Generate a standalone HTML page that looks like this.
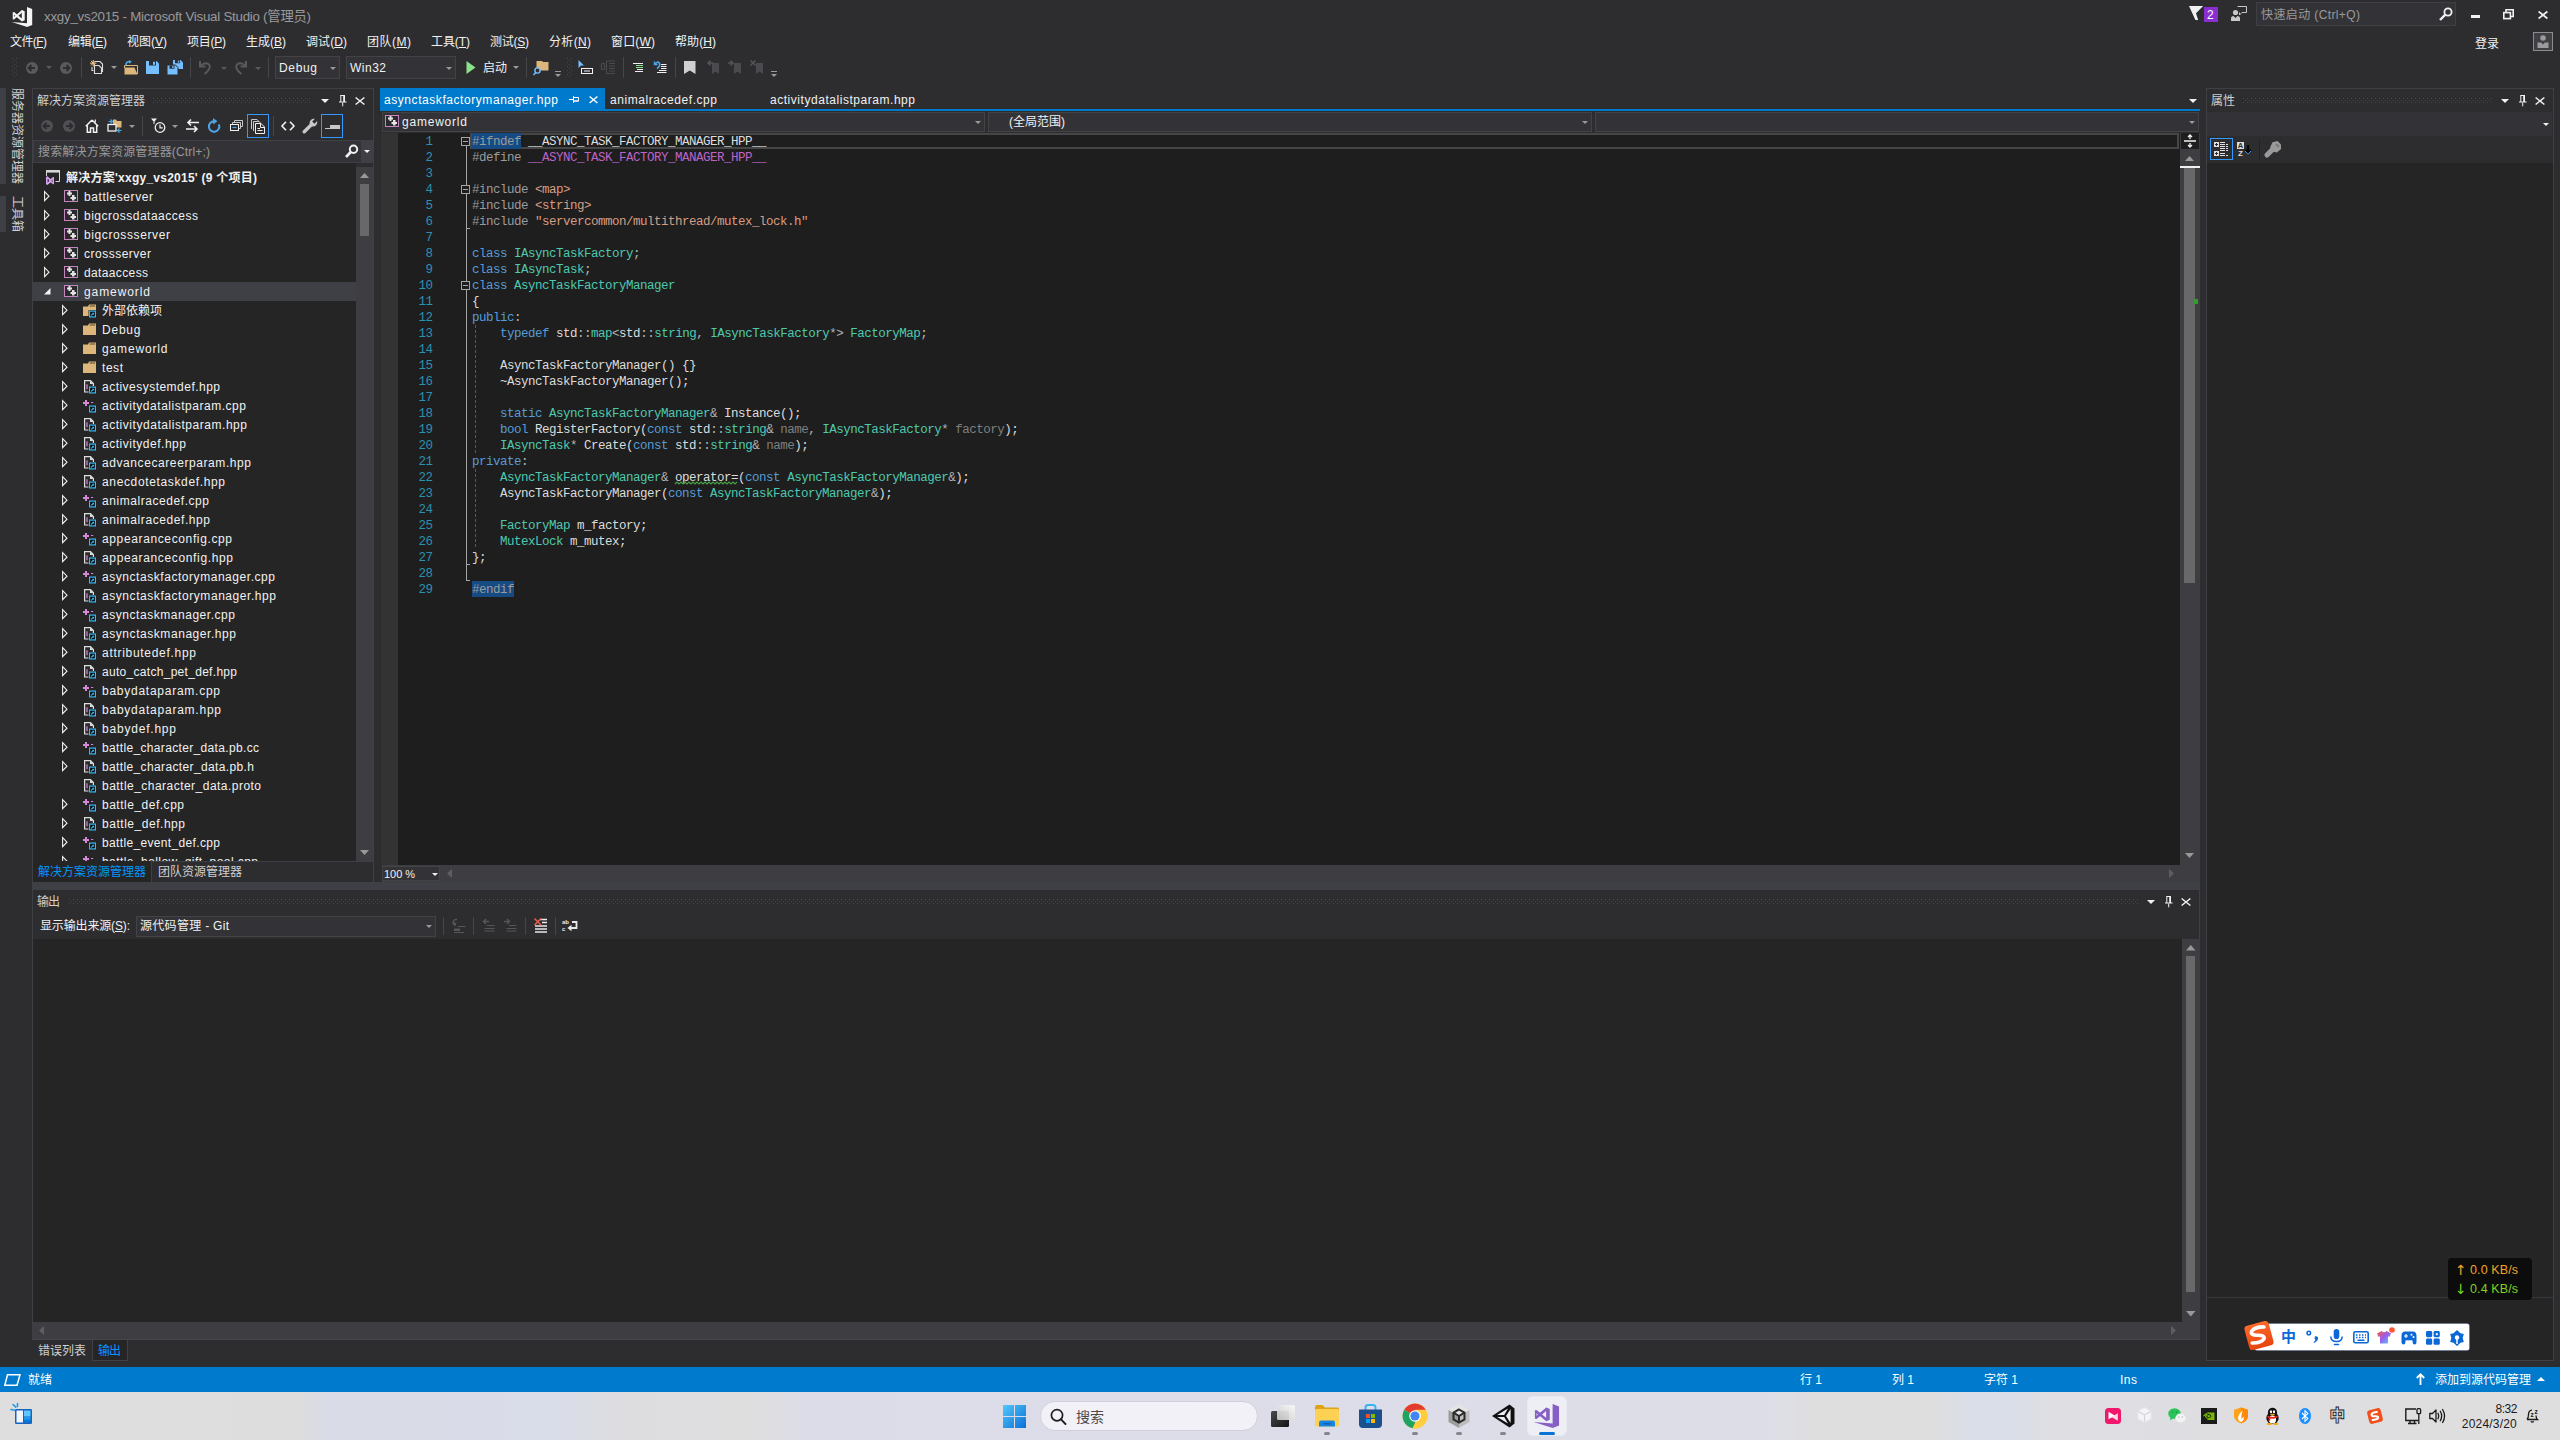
<!DOCTYPE html>
<html lang="zh-CN"><head><meta charset="utf-8"><title>xxgy_vs2015 - Microsoft Visual Studio</title>
<style>
html,body{margin:0;padding:0;background:#2d2d30;}
body{width:2560px;height:1440px;overflow:hidden;background:#2d2d30;position:relative;font-family:'Liberation Sans','Noto Sans CJK SC',sans-serif;font-size:12px;}
div,span.t,svg{position:absolute;}
span.t{white-space:pre;display:block;}
svg{overflow:visible;}
u{text-decoration:underline;text-underline-offset:1px;}
</style></head>
<body>
<svg width="0" height="0" style="left:0;top:0"><defs><pattern id="grip" width="4" height="4" patternUnits="userSpaceOnUse"><rect x="0" y="0" width="1" height="1" fill="#46464a"/><rect x="2" y="2" width="1" height="1" fill="#46464a"/></pattern><pattern id="grip2" width="4" height="4" patternUnits="userSpaceOnUse"><rect x="0" y="0" width="1" height="1" fill="#505055"/><rect x="2" y="2" width="1" height="1" fill="#505055"/></pattern></defs></svg>
<svg style="left:12px;top:7px;" width="21" height="21" viewBox="0 0 21 21"><path d="M15 0L20.2 2V18L15 20Z" fill="#f4f4f4"/><path d="M-.3 15.1L15.2 16.2V20Z" fill="#f4f4f4"/><path d="M1.4 5.9L10.6 13.6M1.4 11.7L10.6 3.7" stroke="#f4f4f4" stroke-width="2.1" fill="none"/><path d="M1.4 5.2V12.4" stroke="#f4f4f4" stroke-width="1.3"/><path d="M9.8 3L12.7 4.2V13.2L9.8 14.4Z" fill="#f4f4f4"/></svg>
<span class="t" style="top:6.8px;font-size:13.33px;line-height:20px;height:20px;color:#999999;left:44px;letter-spacing:-0.251px;">xxgy_vs2015 - Microsoft Visual Studio (管理员)</span>
<svg style="left:2189px;top:6px;" width="15" height="15" viewBox="0 0 15 15"><path d="M0 0H14.2L7 7.3L9.2 14H6.4Z" fill="#f1f1f1"/></svg>
<div style="left:2204px;top:7px;width:14px;height:15px;background:#8a2ed0;"></div>
<span class="t" style="top:6.5px;font-size:12px;line-height:16px;height:16px;color:#ffffff;left:2207px;">2</span>
<svg style="left:2231px;top:6px;" width="16" height="15" viewBox="0 0 16 15"><circle cx="4.5" cy="6.5" r="2.6" fill="#c8c8c8"/><path d="M0 15V12.5Q0 10 2.5 10L4.5 12L6.5 10Q9 10 9 12.5V15Z" fill="#c8c8c8"/><path d="M6.5 .5H15.5V6.5H11L8.5 9V6.5" fill="none" stroke="#c8c8c8" stroke-width="1"/></svg>
<div style="left:2256px;top:2px;width:200px;height:24px;background:#333337;box-sizing:border-box;border:1px solid #3f3f46;"></div>
<span class="t" style="top:5.5px;font-size:12px;line-height:18px;height:18px;color:#999999;left:2261px;letter-spacing:0.388px;">快速启动 (Ctrl+Q)</span>
<svg style="left:2439px;top:7px;" width="14" height="14" viewBox="0 0 14 14"><circle cx="9" cy="5" r="3.6" fill="none" stroke="#f1f1f1" stroke-width="1.8"/><path d="M6.3 7.7L1 13" stroke="#f1f1f1" stroke-width="2.4"/></svg>
<div style="left:2471px;top:15px;width:9px;height:3px;background:#f1f1f1;"></div>
<svg style="left:2503px;top:9px;" width="11" height="11" viewBox="0 0 11 11"><path d="M3 3V.8H10.2V7.5H8" fill="none" stroke="#f1f1f1" stroke-width="1.6"/><rect x=".8" y="3.6" width="6.6" height="6" fill="none" stroke="#f1f1f1" stroke-width="1.6"/></svg>
<svg style="left:2538px;top:10.5px;" width="10" height="8" viewBox="0 0 10 8"><path d="M.6 .5L9.4 7.5M9.4 .5L.6 7.5" stroke="#f1f1f1" stroke-width="1.6" fill="none"/></svg>
<span class="t" style="top:34.5px;font-size:12px;line-height:18px;height:18px;color:#f1f1f1;left:2475px;letter-spacing:-0.016px;">登录</span>
<div style="left:2533px;top:32px;width:20px;height:19px;background:#3f3f46;box-sizing:border-box;border:1px solid #8c8c8c;"></div>
<svg style="left:2537px;top:35px;" width="12" height="13" viewBox="0 0 12 13"><circle cx="6" cy="3" r="2.8" fill="#9b9b9b"/><path d="M.5 13V7.5H4L6 9.5L8 7.5H11.5V13Z" fill="#9b9b9b"/></svg>
<span class="t" style="top:33px;font-size:12px;line-height:18px;height:18px;color:#f1f1f1;left:10px;letter-spacing:-0.586px;">文件(<u>F</u>)</span>
<span class="t" style="top:33px;font-size:12px;line-height:18px;height:18px;color:#f1f1f1;left:68px;letter-spacing:-0.254px;">编辑(<u>E</u>)</span>
<span class="t" style="top:33px;font-size:12px;line-height:18px;height:18px;color:#f1f1f1;left:127px;letter-spacing:-0.004px;">视图(<u>V</u>)</span>
<span class="t" style="top:33px;font-size:12px;line-height:18px;height:18px;color:#f1f1f1;left:187px;letter-spacing:-0.254px;">项目(<u>P</u>)</span>
<span class="t" style="top:33px;font-size:12px;line-height:18px;height:18px;color:#f1f1f1;left:246px;letter-spacing:-0.004px;">生成(<u>B</u>)</span>
<span class="t" style="top:33px;font-size:12px;line-height:18px;height:18px;color:#f1f1f1;left:306px;letter-spacing:0.082px;">调试(<u>D</u>)</span>
<span class="t" style="top:33px;font-size:12px;line-height:18px;height:18px;color:#f1f1f1;left:367px;letter-spacing:0.500px;">团队(<u>M</u>)</span>
<span class="t" style="top:33px;font-size:12px;line-height:18px;height:18px;color:#f1f1f1;left:431px;letter-spacing:-0.086px;">工具(<u>T</u>)</span>
<span class="t" style="top:33px;font-size:12px;line-height:18px;height:18px;color:#f1f1f1;left:490px;letter-spacing:-0.254px;">测试(<u>S</u>)</span>
<span class="t" style="top:33px;font-size:12px;line-height:18px;height:18px;color:#f1f1f1;left:549px;letter-spacing:0.332px;">分析(<u>N</u>)</span>
<span class="t" style="top:33px;font-size:12px;line-height:18px;height:18px;color:#f1f1f1;left:611px;letter-spacing:0.168px;">窗口(<u>W</u>)</span>
<span class="t" style="top:33px;font-size:12px;line-height:18px;height:18px;color:#f1f1f1;left:675px;letter-spacing:0.082px;">帮助(<u>H</u>)</span>
<svg style="left:12px;top:58px" width="5" height="20"><rect width="5" height="20" fill="url(#grip)"/></svg>
<svg style="left:26px;top:61.5px;" width="12" height="12" viewBox="0 0 12 12"><circle cx="6" cy="6" r="6" fill="#5a5a5e"/><path d="M9 6H3M5.5 3L2.5 6L5.5 9" stroke="#2d2d30" stroke-width="1.8" fill="none"/></svg>
<svg style="left:45.5px;top:66px" width="6" height="3"><polygon points="0,0 6,0 3.0,3" fill="#5a5a5e"/></svg>
<svg style="left:60px;top:61.5px;" width="12" height="12" viewBox="0 0 12 12"><circle cx="6" cy="6" r="6" fill="#5a5a5e"/><path d="M3 6H9M6.5 3L9.5 6L6.5 9" stroke="#2d2d30" stroke-width="1.8" fill="none"/></svg>
<div style="left:81px;top:57px;width:1px;height:21px;background:#46464a;"></div>
<svg style="left:90px;top:60px;" width="14" height="15" viewBox="0 0 14 15"><path d="M4.5 1.5H10L12.5 4V11.5H10.5" fill="none" stroke="#dcdcdc" stroke-width="1.1"/><path d="M2 7V10.5H3.5" fill="none" stroke="#dcdcdc" stroke-width="1.1"/><path d="M4.5 5.5H9L11.5 8V13.5H4.5Z" fill="#2d2d30" stroke="#dcdcdc" stroke-width="1.1"/><path d="M3.2 0V6.4M0 3.2H6.4M1 1L5.4 5.4M5.4 1L1 5.4" stroke="#f5c98a" stroke-width="1"/></svg>
<svg style="left:111px;top:66px" width="6" height="3"><polygon points="0,0 6,0 3.0,3" fill="#999999"/></svg>
<svg style="left:124px;top:60px;" width="15" height="15" viewBox="0 0 15 15"><path d="M.5 14.5V7.5H10.5L13.5 14.5Z" fill="#dcb67a"/><path d="M.5 8V5.5H13.5V14" fill="none" stroke="#dcb67a" stroke-width="1"/><path d="M2 5Q2 1.5 6 1.5" fill="none" stroke="#4da6e8" stroke-width="1.6"/><path d="M5 0L8 1.8L5 3.8Z" fill="#4da6e8"/></svg>
<svg style="left:146px;top:61px;" width="13" height="13" viewBox="0 0 13 13"><path d="M0 0H10.5L13 2.5V13H0Z" fill="#75beff"/><rect x="3" y="0" width="7" height="4.5" fill="#2d2d30"/><rect x="7" y=".8" width="2" height="3" fill="#75beff"/></svg>
<svg style="left:167px;top:60px;" width="16" height="15" viewBox="0 0 16 15"><path d="M6 0H13.5L16 2.5V9H6Z" fill="#75beff"/><rect x="8" y="0" width="5" height="3.2" fill="#2d2d30"/><rect x="10.8" y=".6" width="1.4" height="2" fill="#75beff"/><path d="M0 5H8.5L11 7.5V15H0Z" fill="#75beff" stroke="#2d2d30" stroke-width="1"/><rect x="2.5" y="5.5" width="5" height="3.2" fill="#2d2d30"/><rect x="5.2" y="6" width="1.4" height="2" fill="#75beff"/></svg>
<div style="left:190px;top:57px;width:1px;height:21px;background:#46464a;"></div>
<svg style="left:198px;top:60px;" width="15" height="15" viewBox="0 0 15 15"><path d="M2 1V6.5H7.5" fill="none" stroke="#5a5a5e" stroke-width="2"/><path d="M2.5 6Q7 1.5 11 4.5Q14 8 6.5 14" fill="none" stroke="#5a5a5e" stroke-width="2"/></svg>
<svg style="left:220.5px;top:66.5px" width="6" height="3"><polygon points="0,0 6,0 3.0,3" fill="#5a5a5e"/></svg>
<svg style="left:233px;top:60px;" width="15" height="15" viewBox="0 0 15 15"><path d="M13 1V6.5H7.5" fill="none" stroke="#5a5a5e" stroke-width="2"/><path d="M12.5 6Q8 1.5 4 4.5Q1 8 8.5 14" fill="none" stroke="#5a5a5e" stroke-width="2"/></svg>
<svg style="left:254.5px;top:66.5px" width="6" height="3"><polygon points="0,0 6,0 3.0,3" fill="#5a5a5e"/></svg>
<div style="left:268px;top:57px;width:1px;height:21px;background:#46464a;"></div>
<div style="left:275px;top:56px;width:65px;height:23px;background:#333337;box-sizing:border-box;border:1px solid #434346;"></div>
<span class="t" style="top:58.5px;font-size:12px;line-height:18px;height:18px;color:#f1f1f1;left:279px;letter-spacing:0.656px;">Debug</span>
<svg style="left:329.5px;top:66.5px" width="6" height="3"><polygon points="0,0 6,0 3.0,3" fill="#999999"/></svg>
<div style="left:346px;top:56px;width:110px;height:23px;background:#333337;box-sizing:border-box;border:1px solid #434346;"></div>
<span class="t" style="top:58.5px;font-size:12px;line-height:18px;height:18px;color:#f1f1f1;left:350px;letter-spacing:0.496px;">Win32</span>
<svg style="left:445.5px;top:66.5px" width="6" height="3"><polygon points="0,0 6,0 3.0,3" fill="#999999"/></svg>
<svg style="left:466px;top:61px;" width="10" height="13" viewBox="0 0 10 13"><path d="M.5 0L9.5 6.5L.5 13Z" fill="#8ae28a"/></svg>
<span class="t" style="top:58.5px;font-size:12px;line-height:18px;height:18px;color:#f1f1f1;left:483px;letter-spacing:-0.016px;">启动</span>
<svg style="left:513px;top:66px" width="6" height="3"><polygon points="0,0 6,0 3.0,3" fill="#999999"/></svg>
<div style="left:526px;top:57px;width:1px;height:21px;background:#46464a;"></div>
<svg style="left:533px;top:60px;" width="17" height="16" viewBox="0 0 17 16"><path d="M3.5 1H9L10 2H15.5V10.5H3.5Z" fill="#dcb67a"/><circle cx="4.5" cy="10.5" r="2.6" fill="#2d2d30" stroke="#75beff" stroke-width="1.4"/><path d="M2.8 12.5L.5 15" stroke="#75beff" stroke-width="1.6"/></svg>
<div style="left:555px;top:71px;width:6px;height:1px;background:#999999;"></div>
<svg style="left:555px;top:74px" width="6" height="3"><polygon points="0,0 6,0 3.0,3" fill="#999999"/></svg>
<svg style="left:567px;top:58px" width="5" height="20"><rect width="5" height="20" fill="url(#grip)"/></svg>
<svg style="left:578px;top:60px;" width="16" height="15" viewBox="0 0 16 15"><path d="M.5 0L6 5.5H3L.5 8Z" fill="#75beff"/><rect x="3.5" y="8.5" width="11" height="5" fill="none" stroke="#f1f1f1"/><path d="M6 11H12" stroke="#f1f1f1"/></svg>
<svg style="left:601px;top:60px;" width="16" height="15" viewBox="0 0 16 15"><path d="M.5 3.5H3.5V9.5H.5Z M5.5 1H14M8 3.5H14M8 6H14M8 8.5H14M8 11H14M5.5 13.5H14M5.5 1V13.5" fill="none" stroke="#4a4a4f"/></svg>
<div style="left:623px;top:57px;width:1px;height:21px;background:#46464a;"></div>
<svg style="left:631px;top:61px;" width="15" height="13" viewBox="0 0 15 13"><path d="M2 2.5H12M6 8.5H12M4 10.5H12" stroke="#f1f1f1"/><path d="M5 4.5H12M5 6.5H12" stroke="#8ae28a"/></svg>
<svg style="left:653px;top:60px;" width="16" height="15" viewBox="0 0 16 15"><path d="M1.5 1.5V4.5H4.5" fill="none" stroke="#4da6e8" stroke-width="1.4"/><path d="M2 4Q4.5 .8 6.5 3.2Q7.5 6 4 8.5" fill="none" stroke="#4da6e8" stroke-width="1.6"/><path d="M8 4.5H13.5M8 6.5H13.5M8 8.5H13.5M6 10.5H13.5M4 12.5H13.5" stroke="#f1f1f1"/></svg>
<div style="left:675px;top:57px;width:1px;height:21px;background:#46464a;"></div>
<svg style="left:684px;top:61px;" width="12" height="13" viewBox="0 0 12 13"><path d="M0 0H11.5V13L5.75 9.6L0 13Z" fill="#d0d0d0"/></svg>
<svg style="left:706px;top:60px;" width="14" height="15" viewBox="0 0 14 15"><path d="M6 3H13V14L9.5 11.5L6 14Z" fill="#4a4a4f"/><path d="M7 3H2M4.5 .5L2 3L4.5 5.5" fill="none" stroke="#55555a" stroke-width="1.4"/></svg>
<svg style="left:728px;top:60px;" width="14" height="15" viewBox="0 0 14 15"><path d="M6 3H13V14L9.5 11.5L6 14Z" fill="#4a4a4f"/><path d="M0 3H5M2.5 .5L5 3L2.5 5.5" fill="none" stroke="#55555a" stroke-width="1.4"/></svg>
<svg style="left:750px;top:60px;" width="14" height="15" viewBox="0 0 14 15"><path d="M6 3H13V14L9.5 11.5L6 14Z" fill="#4a4a4f"/><path d="M.5 .5L5.5 5.5M5.5 .5L.5 5.5" fill="none" stroke="#55555a" stroke-width="1.4"/></svg>
<div style="left:771px;top:71px;width:6px;height:1px;background:#999999;"></div>
<svg style="left:771px;top:74px" width="6" height="3"><polygon points="0,0 6,0 3.0,3" fill="#999999"/></svg>
<div style="left:0px;top:88px;width:6px;height:96px;background:#3f3f46;"></div>
<div style="left:0px;top:196px;width:6px;height:36px;background:#3f3f46;"></div>
<span class="t" style="left:8px;top:88px;width:18px;height:96px;line-height:18px;font-size:12px;color:#d0d0d0;writing-mode:vertical-rl;text-orientation:sideways;white-space:pre;">服务器资源管理器</span>
<span class="t" style="left:8px;top:196px;width:18px;height:37px;line-height:18px;font-size:12px;color:#d0d0d0;writing-mode:vertical-rl;text-orientation:sideways;white-space:pre;">工具箱</span>
<div style="left:32px;top:88px;width:342px;height:795px;background:#3f3f46;"></div>
<div style="left:33px;top:89px;width:340px;height:793px;background:#2d2d30;"></div>
<span class="t" style="top:91.5px;font-size:12px;line-height:18px;height:18px;color:#d0d0d0;left:37px;letter-spacing:-0.002px;">解决方案资源管理器</span>
<svg style="left:153px;top:98px" width="158" height="5"><rect width="158" height="5" fill="url(#grip)"/></svg>
<svg style="left:321px;top:99px" width="8" height="4"><polygon points="0,0 8,0 4.0,4" fill="#f1f1f1"/></svg>
<svg style="left:339px;top:95px;" width="8" height="12" viewBox="0 0 8 12"><path d="M1.8 .5V7M1.3 .5H6" fill="none" stroke="#f1f1f1" stroke-width="1"/><rect x="4.2" y=".5" width="1.8" height="6.5" fill="#f1f1f1"/><rect x="0" y="6.5" width="7.6" height="1" fill="#f1f1f1"/><rect x="3.2" y="7.5" width="1" height="3.8" fill="#f1f1f1"/></svg>
<svg style="left:355px;top:96.5px;" width="10" height="8" viewBox="0 0 10 8"><path d="M.6 .5L9.4 7.5M9.4 .5L.6 7.5" stroke="#f1f1f1" stroke-width="1.5" fill="none"/></svg>
<svg style="left:41px;top:120px;" width="12" height="12" viewBox="0 0 12 12"><circle cx="6" cy="6" r="6" fill="#4f4f54"/><path d="M9 6H3M5.5 3L2.5 6L5.5 9" stroke="#2d2d30" stroke-width="1.8" fill="none"/></svg>
<svg style="left:63px;top:120px;" width="12" height="12" viewBox="0 0 12 12"><circle cx="6" cy="6" r="6" fill="#4f4f54"/><path d="M3 6H9M6.5 3L9.5 6L6.5 9" stroke="#2d2d30" stroke-width="1.8" fill="none"/></svg>
<svg style="left:85px;top:119px;" width="14" height="14" viewBox="0 0 14 14"><path d="M7 1L.8 7.2M7 1L13.2 7.2M2.3 6.5V13.2H5.5V9H8.5V13.2H11.7V6.5" fill="none" stroke="#f1f1f1" stroke-width="1.5"/><path d="M10.3 .5V3.5" stroke="#f1f1f1" stroke-width="1.2"/></svg>
<svg style="left:107px;top:118px;" width="16" height="16" viewBox="0 0 16 16"><path d="M6 1.5H9L10 3H14.5V9.5H6Z" fill="#dcb67a"/><rect x="1" y="6.5" width="8" height="6.5" fill="#2d2d30" stroke="#f1f1f1" stroke-width="1.3"/><path d="M1.5 3.5H4.5M3.5 1.5L5.5 3.5L3.5 5.5" fill="none" stroke="#4da6e8" stroke-width="1.2"/><path d="M14.5 12.5H11.5M12.5 10.5L10.5 12.5L12.5 14.5" fill="none" stroke="#4da6e8" stroke-width="1.2"/></svg>
<svg style="left:129px;top:125px" width="6" height="3"><polygon points="0,0 6,0 3.0,3" fill="#999999"/></svg>
<div style="left:142px;top:116px;width:1px;height:20px;background:#46464a;"></div>
<svg style="left:151px;top:118px;" width="16" height="16" viewBox="0 0 16 16"><path d="M0 .5H6L3.5 3.5V6H2.5V3.5Z" fill="#f1f1f1"/><circle cx="9" cy="9.5" r="4.8" fill="none" stroke="#f1f1f1" stroke-width="1.3"/><path d="M9 6.5V9.8H11.8" fill="none" stroke="#f1f1f1" stroke-width="1.2"/></svg>
<svg style="left:172px;top:125px" width="6" height="3"><polygon points="0,0 6,0 3.0,3" fill="#999999"/></svg>
<svg style="left:186px;top:119px;" width="13" height="14" viewBox="0 0 13 14"><path d="M13 3.5H2M5 .5L2 3.5L5 6.5" fill="none" stroke="#f1f1f1" stroke-width="1.6"/><path d="M0 10H11M8 7L11 10L8 13" fill="none" stroke="#f1f1f1" stroke-width="1.6"/></svg>
<svg style="left:207px;top:118px;" width="14" height="15" viewBox="0 0 14 15"><path d="M11.8 6.3A5.2 5.2 0 1 1 7 3.3" fill="none" stroke="#4da6e8" stroke-width="2"/><path d="M6 0L10.5 3.3L6 6.6Z" fill="#4da6e8"/></svg>
<svg style="left:230px;top:120px;" width="13" height="12" viewBox="0 0 13 12"><path d="M4.5 2.5V.5H12.5V6.5H10.5" fill="none" stroke="#c8c8c8"/><path d="M2.5 4.5V2.5H10.5V8.5H8.5" fill="none" stroke="#c8c8c8"/><rect x=".5" y="4.5" width="8" height="6" fill="#2d2d30" stroke="#f1f1f1"/><path d="M2.5 7.5H6.5" stroke="#4da6e8" stroke-width="1.2"/></svg>
<div style="left:247px;top:114px;width:22px;height:24px;background:#2d2d30;box-sizing:border-box;border:1px solid #3399ff;"></div>
<svg style="left:251px;top:119px;" width="15" height="15" viewBox="0 0 15 15"><path d="M.5 10V.5H6L8 2.5" fill="none" stroke="#c8c8c8"/><path d="M2.5 12V2.5H8L10 4.5" fill="none" stroke="#c8c8c8"/><path d="M4.5 14.5V4.5H10L13.5 8V14.5Z" fill="#2d2d30" stroke="#f1f1f1"/><path d="M9.5 4.5V8.5H13.5" fill="none" stroke="#f1f1f1"/><path d="M6.5 9.5H9M6.5 11.5H11.5" stroke="#f1f1f1" stroke-width="1"/></svg>
<div style="left:273px;top:116px;width:1px;height:20px;background:#46464a;"></div>
<svg style="left:281px;top:121px;" width="14" height="10" viewBox="0 0 14 10"><path d="M5 .8L1 5L5 9.2M9 .8L13 5L9 9.2" fill="none" stroke="#f1f1f1" stroke-width="1.6"/></svg>
<svg style="left:302px;top:118px;" width="16" height="16" viewBox="0 0 16 16"><path d="M.8 12.8L7.6 6A4.4 4.4 0 0 1 13 .8L10.2 3.6L12.4 5.8L15.2 3A4.4 4.4 0 0 1 10 8.4L3.2 15.2Q2 16 1 15Q0 14 .8 12.8Z" fill="#c8c8c8"/></svg>
<div style="left:321px;top:114px;width:22px;height:24px;background:#2d2d30;box-sizing:border-box;border:1px solid #3399ff;"></div>
<div style="left:325px;top:128px;width:15px;height:1px;background:#c8c8c8;"></div>
<div style="left:330px;top:125px;width:10px;height:3px;background:#c8c8c8;"></div>
<div style="left:33px;top:140px;width:340px;height:23px;background:#3f3f46;"></div>
<div style="left:34px;top:141px;width:327px;height:21px;background:#333337;"></div>
<span class="t" style="top:142.5px;font-size:12px;line-height:18px;height:18px;color:#999999;left:38px;letter-spacing:0.167px;">搜索解决方案资源管理器(Ctrl+;)</span>
<svg style="left:344px;top:144px;" width="14" height="14" viewBox="0 0 14 14"><circle cx="9.5" cy="5.3" r="3.7" fill="none" stroke="#f1f1f1" stroke-width="2"/><path d="M6.8 8L2 13" stroke="#f1f1f1" stroke-width="2.6"/></svg>
<svg style="left:364px;top:150px" width="6" height="3"><polygon points="0,0 6,0 3.0,3" fill="#f1f1f1"/></svg>
<div style="left:33px;top:163px;width:323px;height:698px;background:#252526;"></div>
<div style="left:356px;top:167px;width:17px;height:694px;background:#3e3e42;"></div>
<svg style="left:360px;top:172.5px" width="9" height="5"><polygon points="0,5 9,5 4.5,0" fill="#999999"/></svg>
<div style="left:360px;top:184px;width:9px;height:52px;background:#686868;"></div>
<svg style="left:360px;top:850px" width="9" height="5"><polygon points="0,0 9,0 4.5,5" fill="#999999"/></svg>
<div style="left:33px;top:282px;width:323px;height:19px;background:#3f3f46;"></div>
<div style="left:33px;top:163px;width:323px;height:698px;overflow:hidden;">
<svg style="left:13px;top:7.0px;" width="15" height="15" viewBox="0 0 15 15"><path d="M.5 6V.5H13.5V11.5H9.5" fill="none" stroke="#d6d6d6"/><path d="M0 0H14V2.6H0Z" fill="#d6d6d6"/><path d="M0 7L1.3 6.3L5.8 10V11.6L1.3 15L0 14.3ZM1.6 8.8V12.4L3.8 10.6Z" fill="#d8a0f0" fill-rule="evenodd"/><path d="M2.6 10.7L6 7.8L8 6.8V14.6L6 13.6ZM4.6 10.7L6.4 12.2V9.2Z" fill="#d8a0f0" fill-rule="evenodd"/></svg>
<span class="t" style="top:5.5px;font-size:12px;line-height:18px;height:18px;color:#f1f1f1;left:33px;font-weight:bold;letter-spacing:0.245px;">解决方案'xxgy_vs2015' (9 个项目)</span>
<svg style="left:11px;top:27.5px;" width="6" height="11" viewBox="0 0 6 11"><path d="M.6 .7L5 5.2L.6 9.7Z" fill="none" stroke="#f1f1f1" stroke-width="1.1"/></svg>
<svg style="left:31px;top:27.0px;" width="14" height="12" viewBox="0 0 14 12"><rect x=".5" y=".5" width="13" height="11" fill="#2a2a2d" stroke="#c586c0"/><path d="M3 2.5H8V4.5H3ZM4.5 1H6.5V6H4.5ZM6.5 7H12V9H6.5ZM8 5H10.5V10.5H8Z" fill="#e4e4e4"/></svg>
<span class="t" style="top:24.5px;font-size:12px;line-height:18px;height:18px;color:#f1f1f1;left:51px;letter-spacing:0.572px;">battleserver</span>
<svg style="left:11px;top:46.5px;" width="6" height="11" viewBox="0 0 6 11"><path d="M.6 .7L5 5.2L.6 9.7Z" fill="none" stroke="#f1f1f1" stroke-width="1.1"/></svg>
<svg style="left:31px;top:46.0px;" width="14" height="12" viewBox="0 0 14 12"><rect x=".5" y=".5" width="13" height="11" fill="#2a2a2d" stroke="#c586c0"/><path d="M3 2.5H8V4.5H3ZM4.5 1H6.5V6H4.5ZM6.5 7H12V9H6.5ZM8 5H10.5V10.5H8Z" fill="#e4e4e4"/></svg>
<span class="t" style="top:43.5px;font-size:12px;line-height:18px;height:18px;color:#f1f1f1;left:51px;letter-spacing:0.506px;">bigcrossdataaccess</span>
<svg style="left:11px;top:65.5px;" width="6" height="11" viewBox="0 0 6 11"><path d="M.6 .7L5 5.2L.6 9.7Z" fill="none" stroke="#f1f1f1" stroke-width="1.1"/></svg>
<svg style="left:31px;top:65.0px;" width="14" height="12" viewBox="0 0 14 12"><rect x=".5" y=".5" width="13" height="11" fill="#2a2a2d" stroke="#c586c0"/><path d="M3 2.5H8V4.5H3ZM4.5 1H6.5V6H4.5ZM6.5 7H12V9H6.5ZM8 5H10.5V10.5H8Z" fill="#e4e4e4"/></svg>
<span class="t" style="top:62.5px;font-size:12px;line-height:18px;height:18px;color:#f1f1f1;left:51px;letter-spacing:0.613px;">bigcrossserver</span>
<svg style="left:11px;top:84.5px;" width="6" height="11" viewBox="0 0 6 11"><path d="M.6 .7L5 5.2L.6 9.7Z" fill="none" stroke="#f1f1f1" stroke-width="1.1"/></svg>
<svg style="left:31px;top:84.0px;" width="14" height="12" viewBox="0 0 14 12"><rect x=".5" y=".5" width="13" height="11" fill="#2a2a2d" stroke="#c586c0"/><path d="M3 2.5H8V4.5H3ZM4.5 1H6.5V6H4.5ZM6.5 7H12V9H6.5ZM8 5H10.5V10.5H8Z" fill="#e4e4e4"/></svg>
<span class="t" style="top:81.5px;font-size:12px;line-height:18px;height:18px;color:#f1f1f1;left:51px;letter-spacing:0.498px;">crossserver</span>
<svg style="left:11px;top:103.5px;" width="6" height="11" viewBox="0 0 6 11"><path d="M.6 .7L5 5.2L.6 9.7Z" fill="none" stroke="#f1f1f1" stroke-width="1.1"/></svg>
<svg style="left:31px;top:103.0px;" width="14" height="12" viewBox="0 0 14 12"><rect x=".5" y=".5" width="13" height="11" fill="#2a2a2d" stroke="#c586c0"/><path d="M3 2.5H8V4.5H3ZM4.5 1H6.5V6H4.5ZM6.5 7H12V9H6.5ZM8 5H10.5V10.5H8Z" fill="#e4e4e4"/></svg>
<span class="t" style="top:100.5px;font-size:12px;line-height:18px;height:18px;color:#f1f1f1;left:51px;letter-spacing:0.366px;">dataaccess</span>
<svg style="left:10.5px;top:124.5px;" width="7" height="7" viewBox="0 0 7 7"><path d="M6.5 0V6.5H0Z" fill="#f1f1f1"/></svg>
<svg style="left:31px;top:122.0px;" width="14" height="12" viewBox="0 0 14 12"><rect x=".5" y=".5" width="13" height="11" fill="#2a2a2d" stroke="#c586c0"/><path d="M3 2.5H8V4.5H3ZM4.5 1H6.5V6H4.5ZM6.5 7H12V9H6.5ZM8 5H10.5V10.5H8Z" fill="#e4e4e4"/></svg>
<span class="t" style="top:119.5px;font-size:12px;line-height:18px;height:18px;color:#f1f1f1;left:51px;letter-spacing:0.912px;">gameworld</span>
<svg style="left:29px;top:141.5px;" width="6" height="11" viewBox="0 0 6 11"><path d="M.6 .7L5 5.2L.6 9.7Z" fill="none" stroke="#f1f1f1" stroke-width="1.1"/></svg>
<svg style="left:50px;top:140.5px;" width="15" height="16" viewBox="0 0 15 16"><path d="M0 2.5H5L6 .5H13V12H0Z" fill="#dcb67a"/><path d="M6.8 2H12.2" stroke="#4a3c25" stroke-width=".9"/><rect x="5.5" y="6.0" width="8" height="8" fill="#252526"/><rect x="6.6" y="7.1" width="5.8" height="5.8" fill="#000" stroke="#3db8f5" stroke-width="1.2"/><path d="M8.2 11.5L10.6 9.1" stroke="#3db8f5" stroke-width="1.1"/><path d="M8.8 8.7H11V10.9Z" fill="#3db8f5"/></svg>
<span class="t" style="top:138.5px;font-size:12px;line-height:18px;height:18px;color:#f1f1f1;left:69px;letter-spacing:-0.004px;">外部依赖项</span>
<svg style="left:29px;top:160.5px;" width="6" height="11" viewBox="0 0 6 11"><path d="M.6 .7L5 5.2L.6 9.7Z" fill="none" stroke="#f1f1f1" stroke-width="1.1"/></svg>
<svg style="left:50px;top:159.5px;" width="15" height="16" viewBox="0 0 15 16"><path d="M0 2.5H5L6 .5H13V12H0Z" fill="#dcb67a"/><path d="M6.8 2H12.2" stroke="#4a3c25" stroke-width=".9"/></svg>
<span class="t" style="top:157.5px;font-size:12px;line-height:18px;height:18px;color:#f1f1f1;left:69px;letter-spacing:0.781px;">Debug</span>
<svg style="left:29px;top:179.5px;" width="6" height="11" viewBox="0 0 6 11"><path d="M.6 .7L5 5.2L.6 9.7Z" fill="none" stroke="#f1f1f1" stroke-width="1.1"/></svg>
<svg style="left:50px;top:178.5px;" width="15" height="16" viewBox="0 0 15 16"><path d="M0 2.5H5L6 .5H13V12H0Z" fill="#dcb67a"/><path d="M6.8 2H12.2" stroke="#4a3c25" stroke-width=".9"/></svg>
<span class="t" style="top:176.5px;font-size:12px;line-height:18px;height:18px;color:#f1f1f1;left:69px;letter-spacing:0.850px;">gameworld</span>
<svg style="left:29px;top:198.5px;" width="6" height="11" viewBox="0 0 6 11"><path d="M.6 .7L5 5.2L.6 9.7Z" fill="none" stroke="#f1f1f1" stroke-width="1.1"/></svg>
<svg style="left:50px;top:197.5px;" width="15" height="16" viewBox="0 0 15 16"><path d="M0 2.5H5L6 .5H13V12H0Z" fill="#dcb67a"/><path d="M6.8 2H12.2" stroke="#4a3c25" stroke-width=".9"/></svg>
<span class="t" style="top:195.5px;font-size:12px;line-height:18px;height:18px;color:#f1f1f1;left:69px;letter-spacing:0.552px;">test</span>
<svg style="left:29px;top:217.5px;" width="6" height="11" viewBox="0 0 6 11"><path d="M.6 .7L5 5.2L.6 9.7Z" fill="none" stroke="#f1f1f1" stroke-width="1.1"/></svg>
<svg style="left:50px;top:216.5px;" width="15" height="16" viewBox="0 0 15 16"><path d="M1.6 .6H7.5L10.4 3.5V12H1.6Z" fill="#2b2b2e" stroke="#dedede" stroke-width="1.2"/><path d="M7 .6V4H10.4Z" fill="#dedede"/><path d="M4 4.2V9.2" stroke="#d787d7" stroke-width="1.2"/><rect x="5.5" y="6.0" width="8" height="8" fill="#252526"/><rect x="6.6" y="7.1" width="5.8" height="5.8" fill="#000" stroke="#3db8f5" stroke-width="1.2"/><path d="M8.2 11.5L10.6 9.1" stroke="#3db8f5" stroke-width="1.1"/><path d="M8.8 8.7H11V10.9Z" fill="#3db8f5"/></svg>
<span class="t" style="top:214.5px;font-size:12px;line-height:18px;height:18px;color:#f1f1f1;left:69px;letter-spacing:0.478px;">activesystemdef.hpp</span>
<svg style="left:29px;top:236.5px;" width="6" height="11" viewBox="0 0 6 11"><path d="M.6 .7L5 5.2L.6 9.7Z" fill="none" stroke="#f1f1f1" stroke-width="1.1"/></svg>
<svg style="left:50px;top:235.5px;" width="15" height="16" viewBox="0 0 15 16"><path d="M0 3H6V5H0ZM2 1H4V7H2Z" fill="#d787d7"/><path d="M8 3.5H10.2" stroke="#d787d7" stroke-width="1"/><rect x="5.5" y="6.0" width="8" height="8" fill="#252526"/><rect x="6.6" y="7.1" width="5.8" height="5.8" fill="#000" stroke="#3db8f5" stroke-width="1.2"/><path d="M8.2 11.5L10.6 9.1" stroke="#3db8f5" stroke-width="1.1"/><path d="M8.8 8.7H11V10.9Z" fill="#3db8f5"/></svg>
<span class="t" style="top:233.5px;font-size:12px;line-height:18px;height:18px;color:#f1f1f1;left:69px;letter-spacing:0.525px;">activitydatalistparam.cpp</span>
<svg style="left:29px;top:255.5px;" width="6" height="11" viewBox="0 0 6 11"><path d="M.6 .7L5 5.2L.6 9.7Z" fill="none" stroke="#f1f1f1" stroke-width="1.1"/></svg>
<svg style="left:50px;top:254.5px;" width="15" height="16" viewBox="0 0 15 16"><path d="M1.6 .6H7.5L10.4 3.5V12H1.6Z" fill="#2b2b2e" stroke="#dedede" stroke-width="1.2"/><path d="M7 .6V4H10.4Z" fill="#dedede"/><path d="M4 4.2V9.2" stroke="#d787d7" stroke-width="1.2"/><rect x="5.5" y="6.0" width="8" height="8" fill="#252526"/><rect x="6.6" y="7.1" width="5.8" height="5.8" fill="#000" stroke="#3db8f5" stroke-width="1.2"/><path d="M8.2 11.5L10.6 9.1" stroke="#3db8f5" stroke-width="1.1"/><path d="M8.8 8.7H11V10.9Z" fill="#3db8f5"/></svg>
<span class="t" style="top:252.5px;font-size:12px;line-height:18px;height:18px;color:#f1f1f1;left:69px;letter-spacing:0.538px;">activitydatalistparam.hpp</span>
<svg style="left:29px;top:274.5px;" width="6" height="11" viewBox="0 0 6 11"><path d="M.6 .7L5 5.2L.6 9.7Z" fill="none" stroke="#f1f1f1" stroke-width="1.1"/></svg>
<svg style="left:50px;top:273.5px;" width="15" height="16" viewBox="0 0 15 16"><path d="M1.6 .6H7.5L10.4 3.5V12H1.6Z" fill="#2b2b2e" stroke="#dedede" stroke-width="1.2"/><path d="M7 .6V4H10.4Z" fill="#dedede"/><path d="M4 4.2V9.2" stroke="#d787d7" stroke-width="1.2"/><rect x="5.5" y="6.0" width="8" height="8" fill="#252526"/><rect x="6.6" y="7.1" width="5.8" height="5.8" fill="#000" stroke="#3db8f5" stroke-width="1.2"/><path d="M8.2 11.5L10.6 9.1" stroke="#3db8f5" stroke-width="1.1"/><path d="M8.8 8.7H11V10.9Z" fill="#3db8f5"/></svg>
<span class="t" style="top:271.5px;font-size:12px;line-height:18px;height:18px;color:#f1f1f1;left:69px;letter-spacing:0.520px;">activitydef.hpp</span>
<svg style="left:29px;top:293.5px;" width="6" height="11" viewBox="0 0 6 11"><path d="M.6 .7L5 5.2L.6 9.7Z" fill="none" stroke="#f1f1f1" stroke-width="1.1"/></svg>
<svg style="left:50px;top:292.5px;" width="15" height="16" viewBox="0 0 15 16"><path d="M1.6 .6H7.5L10.4 3.5V12H1.6Z" fill="#2b2b2e" stroke="#dedede" stroke-width="1.2"/><path d="M7 .6V4H10.4Z" fill="#dedede"/><path d="M4 4.2V9.2" stroke="#d787d7" stroke-width="1.2"/><rect x="5.5" y="6.0" width="8" height="8" fill="#252526"/><rect x="6.6" y="7.1" width="5.8" height="5.8" fill="#000" stroke="#3db8f5" stroke-width="1.2"/><path d="M8.2 11.5L10.6 9.1" stroke="#3db8f5" stroke-width="1.1"/><path d="M8.8 8.7H11V10.9Z" fill="#3db8f5"/></svg>
<span class="t" style="top:290.5px;font-size:12px;line-height:18px;height:18px;color:#f1f1f1;left:69px;letter-spacing:0.583px;">advancecareerparam.hpp</span>
<svg style="left:29px;top:312.5px;" width="6" height="11" viewBox="0 0 6 11"><path d="M.6 .7L5 5.2L.6 9.7Z" fill="none" stroke="#f1f1f1" stroke-width="1.1"/></svg>
<svg style="left:50px;top:311.5px;" width="15" height="16" viewBox="0 0 15 16"><path d="M1.6 .6H7.5L10.4 3.5V12H1.6Z" fill="#2b2b2e" stroke="#dedede" stroke-width="1.2"/><path d="M7 .6V4H10.4Z" fill="#dedede"/><path d="M4 4.2V9.2" stroke="#d787d7" stroke-width="1.2"/><rect x="5.5" y="6.0" width="8" height="8" fill="#252526"/><rect x="6.6" y="7.1" width="5.8" height="5.8" fill="#000" stroke="#3db8f5" stroke-width="1.2"/><path d="M8.2 11.5L10.6 9.1" stroke="#3db8f5" stroke-width="1.1"/><path d="M8.8 8.7H11V10.9Z" fill="#3db8f5"/></svg>
<span class="t" style="top:309.5px;font-size:12px;line-height:18px;height:18px;color:#f1f1f1;left:69px;letter-spacing:0.643px;">anecdotetaskdef.hpp</span>
<svg style="left:29px;top:331.5px;" width="6" height="11" viewBox="0 0 6 11"><path d="M.6 .7L5 5.2L.6 9.7Z" fill="none" stroke="#f1f1f1" stroke-width="1.1"/></svg>
<svg style="left:50px;top:330.5px;" width="15" height="16" viewBox="0 0 15 16"><path d="M0 3H6V5H0ZM2 1H4V7H2Z" fill="#d787d7"/><path d="M8 3.5H10.2" stroke="#d787d7" stroke-width="1"/><rect x="5.5" y="6.0" width="8" height="8" fill="#252526"/><rect x="6.6" y="7.1" width="5.8" height="5.8" fill="#000" stroke="#3db8f5" stroke-width="1.2"/><path d="M8.2 11.5L10.6 9.1" stroke="#3db8f5" stroke-width="1.1"/><path d="M8.8 8.7H11V10.9Z" fill="#3db8f5"/></svg>
<span class="t" style="top:328.5px;font-size:12px;line-height:18px;height:18px;color:#f1f1f1;left:69px;letter-spacing:0.559px;">animalracedef.cpp</span>
<svg style="left:29px;top:350.5px;" width="6" height="11" viewBox="0 0 6 11"><path d="M.6 .7L5 5.2L.6 9.7Z" fill="none" stroke="#f1f1f1" stroke-width="1.1"/></svg>
<svg style="left:50px;top:349.5px;" width="15" height="16" viewBox="0 0 15 16"><path d="M1.6 .6H7.5L10.4 3.5V12H1.6Z" fill="#2b2b2e" stroke="#dedede" stroke-width="1.2"/><path d="M7 .6V4H10.4Z" fill="#dedede"/><path d="M4 4.2V9.2" stroke="#d787d7" stroke-width="1.2"/><rect x="5.5" y="6.0" width="8" height="8" fill="#252526"/><rect x="6.6" y="7.1" width="5.8" height="5.8" fill="#000" stroke="#3db8f5" stroke-width="1.2"/><path d="M8.2 11.5L10.6 9.1" stroke="#3db8f5" stroke-width="1.1"/><path d="M8.8 8.7H11V10.9Z" fill="#3db8f5"/></svg>
<span class="t" style="top:347.5px;font-size:12px;line-height:18px;height:18px;color:#f1f1f1;left:69px;letter-spacing:0.579px;">animalracedef.hpp</span>
<svg style="left:29px;top:369.5px;" width="6" height="11" viewBox="0 0 6 11"><path d="M.6 .7L5 5.2L.6 9.7Z" fill="none" stroke="#f1f1f1" stroke-width="1.1"/></svg>
<svg style="left:50px;top:368.5px;" width="15" height="16" viewBox="0 0 15 16"><path d="M0 3H6V5H0ZM2 1H4V7H2Z" fill="#d787d7"/><path d="M8 3.5H10.2" stroke="#d787d7" stroke-width="1"/><rect x="5.5" y="6.0" width="8" height="8" fill="#252526"/><rect x="6.6" y="7.1" width="5.8" height="5.8" fill="#000" stroke="#3db8f5" stroke-width="1.2"/><path d="M8.2 11.5L10.6 9.1" stroke="#3db8f5" stroke-width="1.1"/><path d="M8.8 8.7H11V10.9Z" fill="#3db8f5"/></svg>
<span class="t" style="top:366.5px;font-size:12px;line-height:18px;height:18px;color:#f1f1f1;left:69px;letter-spacing:0.627px;">appearanceconfig.cpp</span>
<svg style="left:29px;top:388.5px;" width="6" height="11" viewBox="0 0 6 11"><path d="M.6 .7L5 5.2L.6 9.7Z" fill="none" stroke="#f1f1f1" stroke-width="1.1"/></svg>
<svg style="left:50px;top:387.5px;" width="15" height="16" viewBox="0 0 15 16"><path d="M1.6 .6H7.5L10.4 3.5V12H1.6Z" fill="#2b2b2e" stroke="#dedede" stroke-width="1.2"/><path d="M7 .6V4H10.4Z" fill="#dedede"/><path d="M4 4.2V9.2" stroke="#d787d7" stroke-width="1.2"/><rect x="5.5" y="6.0" width="8" height="8" fill="#252526"/><rect x="6.6" y="7.1" width="5.8" height="5.8" fill="#000" stroke="#3db8f5" stroke-width="1.2"/><path d="M8.2 11.5L10.6 9.1" stroke="#3db8f5" stroke-width="1.1"/><path d="M8.8 8.7H11V10.9Z" fill="#3db8f5"/></svg>
<span class="t" style="top:385.5px;font-size:12px;line-height:18px;height:18px;color:#f1f1f1;left:69px;letter-spacing:0.644px;">appearanceconfig.hpp</span>
<svg style="left:29px;top:407.5px;" width="6" height="11" viewBox="0 0 6 11"><path d="M.6 .7L5 5.2L.6 9.7Z" fill="none" stroke="#f1f1f1" stroke-width="1.1"/></svg>
<svg style="left:50px;top:406.5px;" width="15" height="16" viewBox="0 0 15 16"><path d="M0 3H6V5H0ZM2 1H4V7H2Z" fill="#d787d7"/><path d="M8 3.5H10.2" stroke="#d787d7" stroke-width="1"/><rect x="5.5" y="6.0" width="8" height="8" fill="#252526"/><rect x="6.6" y="7.1" width="5.8" height="5.8" fill="#000" stroke="#3db8f5" stroke-width="1.2"/><path d="M8.2 11.5L10.6 9.1" stroke="#3db8f5" stroke-width="1.1"/><path d="M8.8 8.7H11V10.9Z" fill="#3db8f5"/></svg>
<span class="t" style="top:404.5px;font-size:12px;line-height:18px;height:18px;color:#f1f1f1;left:69px;letter-spacing:0.548px;">asynctaskfactorymanager.cpp</span>
<svg style="left:29px;top:426.5px;" width="6" height="11" viewBox="0 0 6 11"><path d="M.6 .7L5 5.2L.6 9.7Z" fill="none" stroke="#f1f1f1" stroke-width="1.1"/></svg>
<svg style="left:50px;top:425.5px;" width="15" height="16" viewBox="0 0 15 16"><path d="M1.6 .6H7.5L10.4 3.5V12H1.6Z" fill="#2b2b2e" stroke="#dedede" stroke-width="1.2"/><path d="M7 .6V4H10.4Z" fill="#dedede"/><path d="M4 4.2V9.2" stroke="#d787d7" stroke-width="1.2"/><rect x="5.5" y="6.0" width="8" height="8" fill="#252526"/><rect x="6.6" y="7.1" width="5.8" height="5.8" fill="#000" stroke="#3db8f5" stroke-width="1.2"/><path d="M8.2 11.5L10.6 9.1" stroke="#3db8f5" stroke-width="1.1"/><path d="M8.8 8.7H11V10.9Z" fill="#3db8f5"/></svg>
<span class="t" style="top:423.5px;font-size:12px;line-height:18px;height:18px;color:#f1f1f1;left:69px;letter-spacing:0.561px;">asynctaskfactorymanager.hpp</span>
<svg style="left:29px;top:445.5px;" width="6" height="11" viewBox="0 0 6 11"><path d="M.6 .7L5 5.2L.6 9.7Z" fill="none" stroke="#f1f1f1" stroke-width="1.1"/></svg>
<svg style="left:50px;top:444.5px;" width="15" height="16" viewBox="0 0 15 16"><path d="M0 3H6V5H0ZM2 1H4V7H2Z" fill="#d787d7"/><path d="M8 3.5H10.2" stroke="#d787d7" stroke-width="1"/><rect x="5.5" y="6.0" width="8" height="8" fill="#252526"/><rect x="6.6" y="7.1" width="5.8" height="5.8" fill="#000" stroke="#3db8f5" stroke-width="1.2"/><path d="M8.2 11.5L10.6 9.1" stroke="#3db8f5" stroke-width="1.1"/><path d="M8.8 8.7H11V10.9Z" fill="#3db8f5"/></svg>
<span class="t" style="top:442.5px;font-size:12px;line-height:18px;height:18px;color:#f1f1f1;left:69px;letter-spacing:0.539px;">asynctaskmanager.cpp</span>
<svg style="left:29px;top:464.5px;" width="6" height="11" viewBox="0 0 6 11"><path d="M.6 .7L5 5.2L.6 9.7Z" fill="none" stroke="#f1f1f1" stroke-width="1.1"/></svg>
<svg style="left:50px;top:463.5px;" width="15" height="16" viewBox="0 0 15 16"><path d="M1.6 .6H7.5L10.4 3.5V12H1.6Z" fill="#2b2b2e" stroke="#dedede" stroke-width="1.2"/><path d="M7 .6V4H10.4Z" fill="#dedede"/><path d="M4 4.2V9.2" stroke="#d787d7" stroke-width="1.2"/><rect x="5.5" y="6.0" width="8" height="8" fill="#252526"/><rect x="6.6" y="7.1" width="5.8" height="5.8" fill="#000" stroke="#3db8f5" stroke-width="1.2"/><path d="M8.2 11.5L10.6 9.1" stroke="#3db8f5" stroke-width="1.1"/><path d="M8.8 8.7H11V10.9Z" fill="#3db8f5"/></svg>
<span class="t" style="top:461.5px;font-size:12px;line-height:18px;height:18px;color:#f1f1f1;left:69px;letter-spacing:0.557px;">asynctaskmanager.hpp</span>
<svg style="left:29px;top:483.5px;" width="6" height="11" viewBox="0 0 6 11"><path d="M.6 .7L5 5.2L.6 9.7Z" fill="none" stroke="#f1f1f1" stroke-width="1.1"/></svg>
<svg style="left:50px;top:482.5px;" width="15" height="16" viewBox="0 0 15 16"><path d="M1.6 .6H7.5L10.4 3.5V12H1.6Z" fill="#2b2b2e" stroke="#dedede" stroke-width="1.2"/><path d="M7 .6V4H10.4Z" fill="#dedede"/><path d="M4 4.2V9.2" stroke="#d787d7" stroke-width="1.2"/><rect x="5.5" y="6.0" width="8" height="8" fill="#252526"/><rect x="6.6" y="7.1" width="5.8" height="5.8" fill="#000" stroke="#3db8f5" stroke-width="1.2"/><path d="M8.2 11.5L10.6 9.1" stroke="#3db8f5" stroke-width="1.1"/><path d="M8.8 8.7H11V10.9Z" fill="#3db8f5"/></svg>
<span class="t" style="top:480.5px;font-size:12px;line-height:18px;height:18px;color:#f1f1f1;left:69px;letter-spacing:0.706px;">attributedef.hpp</span>
<svg style="left:29px;top:502.5px;" width="6" height="11" viewBox="0 0 6 11"><path d="M.6 .7L5 5.2L.6 9.7Z" fill="none" stroke="#f1f1f1" stroke-width="1.1"/></svg>
<svg style="left:50px;top:501.5px;" width="15" height="16" viewBox="0 0 15 16"><path d="M1.6 .6H7.5L10.4 3.5V12H1.6Z" fill="#2b2b2e" stroke="#dedede" stroke-width="1.2"/><path d="M7 .6V4H10.4Z" fill="#dedede"/><path d="M4 4.2V9.2" stroke="#d787d7" stroke-width="1.2"/><rect x="5.5" y="6.0" width="8" height="8" fill="#252526"/><rect x="6.6" y="7.1" width="5.8" height="5.8" fill="#000" stroke="#3db8f5" stroke-width="1.2"/><path d="M8.2 11.5L10.6 9.1" stroke="#3db8f5" stroke-width="1.1"/><path d="M8.8 8.7H11V10.9Z" fill="#3db8f5"/></svg>
<span class="t" style="top:499.5px;font-size:12px;line-height:18px;height:18px;color:#f1f1f1;left:69px;letter-spacing:0.296px;">auto_catch_pet_def.hpp</span>
<svg style="left:29px;top:521.5px;" width="6" height="11" viewBox="0 0 6 11"><path d="M.6 .7L5 5.2L.6 9.7Z" fill="none" stroke="#f1f1f1" stroke-width="1.1"/></svg>
<svg style="left:50px;top:520.5px;" width="15" height="16" viewBox="0 0 15 16"><path d="M0 3H6V5H0ZM2 1H4V7H2Z" fill="#d787d7"/><path d="M8 3.5H10.2" stroke="#d787d7" stroke-width="1"/><rect x="5.5" y="6.0" width="8" height="8" fill="#252526"/><rect x="6.6" y="7.1" width="5.8" height="5.8" fill="#000" stroke="#3db8f5" stroke-width="1.2"/><path d="M8.2 11.5L10.6 9.1" stroke="#3db8f5" stroke-width="1.1"/><path d="M8.8 8.7H11V10.9Z" fill="#3db8f5"/></svg>
<span class="t" style="top:518.5px;font-size:12px;line-height:18px;height:18px;color:#f1f1f1;left:69px;letter-spacing:0.745px;">babydataparam.cpp</span>
<svg style="left:29px;top:540.5px;" width="6" height="11" viewBox="0 0 6 11"><path d="M.6 .7L5 5.2L.6 9.7Z" fill="none" stroke="#f1f1f1" stroke-width="1.1"/></svg>
<svg style="left:50px;top:539.5px;" width="15" height="16" viewBox="0 0 15 16"><path d="M1.6 .6H7.5L10.4 3.5V12H1.6Z" fill="#2b2b2e" stroke="#dedede" stroke-width="1.2"/><path d="M7 .6V4H10.4Z" fill="#dedede"/><path d="M4 4.2V9.2" stroke="#d787d7" stroke-width="1.2"/><rect x="5.5" y="6.0" width="8" height="8" fill="#252526"/><rect x="6.6" y="7.1" width="5.8" height="5.8" fill="#000" stroke="#3db8f5" stroke-width="1.2"/><path d="M8.2 11.5L10.6 9.1" stroke="#3db8f5" stroke-width="1.1"/><path d="M8.8 8.7H11V10.9Z" fill="#3db8f5"/></svg>
<span class="t" style="top:537.5px;font-size:12px;line-height:18px;height:18px;color:#f1f1f1;left:69px;letter-spacing:0.766px;">babydataparam.hpp</span>
<svg style="left:29px;top:559.5px;" width="6" height="11" viewBox="0 0 6 11"><path d="M.6 .7L5 5.2L.6 9.7Z" fill="none" stroke="#f1f1f1" stroke-width="1.1"/></svg>
<svg style="left:50px;top:558.5px;" width="15" height="16" viewBox="0 0 15 16"><path d="M1.6 .6H7.5L10.4 3.5V12H1.6Z" fill="#2b2b2e" stroke="#dedede" stroke-width="1.2"/><path d="M7 .6V4H10.4Z" fill="#dedede"/><path d="M4 4.2V9.2" stroke="#d787d7" stroke-width="1.2"/><rect x="5.5" y="6.0" width="8" height="8" fill="#252526"/><rect x="6.6" y="7.1" width="5.8" height="5.8" fill="#000" stroke="#3db8f5" stroke-width="1.2"/><path d="M8.2 11.5L10.6 9.1" stroke="#3db8f5" stroke-width="1.1"/><path d="M8.8 8.7H11V10.9Z" fill="#3db8f5"/></svg>
<span class="t" style="top:556.5px;font-size:12px;line-height:18px;height:18px;color:#f1f1f1;left:69px;letter-spacing:0.794px;">babydef.hpp</span>
<svg style="left:29px;top:578.5px;" width="6" height="11" viewBox="0 0 6 11"><path d="M.6 .7L5 5.2L.6 9.7Z" fill="none" stroke="#f1f1f1" stroke-width="1.1"/></svg>
<svg style="left:50px;top:577.5px;" width="15" height="16" viewBox="0 0 15 16"><path d="M0 3H6V5H0ZM2 1H4V7H2Z" fill="#d787d7"/><path d="M8 3.5H10.2" stroke="#d787d7" stroke-width="1"/><rect x="5.5" y="6.0" width="8" height="8" fill="#252526"/><rect x="6.6" y="7.1" width="5.8" height="5.8" fill="#000" stroke="#3db8f5" stroke-width="1.2"/><path d="M8.2 11.5L10.6 9.1" stroke="#3db8f5" stroke-width="1.1"/><path d="M8.8 8.7H11V10.9Z" fill="#3db8f5"/></svg>
<span class="t" style="top:575.5px;font-size:12px;line-height:18px;height:18px;color:#f1f1f1;left:69px;letter-spacing:0.342px;">battle_character_data.pb.cc</span>
<svg style="left:29px;top:597.5px;" width="6" height="11" viewBox="0 0 6 11"><path d="M.6 .7L5 5.2L.6 9.7Z" fill="none" stroke="#f1f1f1" stroke-width="1.1"/></svg>
<svg style="left:50px;top:596.5px;" width="15" height="16" viewBox="0 0 15 16"><path d="M1.6 .6H7.5L10.4 3.5V12H1.6Z" fill="#2b2b2e" stroke="#dedede" stroke-width="1.2"/><path d="M7 .6V4H10.4Z" fill="#dedede"/><path d="M4 4.2V9.2" stroke="#d787d7" stroke-width="1.2"/><rect x="5.5" y="6.0" width="8" height="8" fill="#252526"/><rect x="6.6" y="7.1" width="5.8" height="5.8" fill="#000" stroke="#3db8f5" stroke-width="1.2"/><path d="M8.2 11.5L10.6 9.1" stroke="#3db8f5" stroke-width="1.1"/><path d="M8.8 8.7H11V10.9Z" fill="#3db8f5"/></svg>
<span class="t" style="top:594.5px;font-size:12px;line-height:18px;height:18px;color:#f1f1f1;left:69px;letter-spacing:0.369px;">battle_character_data.pb.h</span>
<svg style="left:50px;top:615.5px;" width="15" height="16" viewBox="0 0 15 16"><path d="M1.6 .6H7.5L10.4 3.5V12H1.6Z" fill="#2b2b2e" stroke="#dedede" stroke-width="1.2"/><path d="M7 .6V4H10.4Z" fill="#dedede"/><path d="M4 4.2V9.2" stroke="#d787d7" stroke-width="1.2"/><rect x="5.5" y="6.0" width="8" height="8" fill="#252526"/><rect x="6.6" y="7.1" width="5.8" height="5.8" fill="#000" stroke="#3db8f5" stroke-width="1.2"/><path d="M8.2 11.5L10.6 9.1" stroke="#3db8f5" stroke-width="1.1"/><path d="M8.8 8.7H11V10.9Z" fill="#3db8f5"/></svg>
<span class="t" style="top:613.5px;font-size:12px;line-height:18px;height:18px;color:#f1f1f1;left:69px;letter-spacing:0.471px;">battle_character_data.proto</span>
<svg style="left:29px;top:635.5px;" width="6" height="11" viewBox="0 0 6 11"><path d="M.6 .7L5 5.2L.6 9.7Z" fill="none" stroke="#f1f1f1" stroke-width="1.1"/></svg>
<svg style="left:50px;top:634.5px;" width="15" height="16" viewBox="0 0 15 16"><path d="M0 3H6V5H0ZM2 1H4V7H2Z" fill="#d787d7"/><path d="M8 3.5H10.2" stroke="#d787d7" stroke-width="1"/><rect x="5.5" y="6.0" width="8" height="8" fill="#252526"/><rect x="6.6" y="7.1" width="5.8" height="5.8" fill="#000" stroke="#3db8f5" stroke-width="1.2"/><path d="M8.2 11.5L10.6 9.1" stroke="#3db8f5" stroke-width="1.1"/><path d="M8.8 8.7H11V10.9Z" fill="#3db8f5"/></svg>
<span class="t" style="top:632.5px;font-size:12px;line-height:18px;height:18px;color:#f1f1f1;left:69px;letter-spacing:0.507px;">battle_def.cpp</span>
<svg style="left:29px;top:654.5px;" width="6" height="11" viewBox="0 0 6 11"><path d="M.6 .7L5 5.2L.6 9.7Z" fill="none" stroke="#f1f1f1" stroke-width="1.1"/></svg>
<svg style="left:50px;top:653.5px;" width="15" height="16" viewBox="0 0 15 16"><path d="M1.6 .6H7.5L10.4 3.5V12H1.6Z" fill="#2b2b2e" stroke="#dedede" stroke-width="1.2"/><path d="M7 .6V4H10.4Z" fill="#dedede"/><path d="M4 4.2V9.2" stroke="#d787d7" stroke-width="1.2"/><rect x="5.5" y="6.0" width="8" height="8" fill="#252526"/><rect x="6.6" y="7.1" width="5.8" height="5.8" fill="#000" stroke="#3db8f5" stroke-width="1.2"/><path d="M8.2 11.5L10.6 9.1" stroke="#3db8f5" stroke-width="1.1"/><path d="M8.8 8.7H11V10.9Z" fill="#3db8f5"/></svg>
<span class="t" style="top:651.5px;font-size:12px;line-height:18px;height:18px;color:#f1f1f1;left:69px;letter-spacing:0.532px;">battle_def.hpp</span>
<svg style="left:29px;top:673.5px;" width="6" height="11" viewBox="0 0 6 11"><path d="M.6 .7L5 5.2L.6 9.7Z" fill="none" stroke="#f1f1f1" stroke-width="1.1"/></svg>
<svg style="left:50px;top:672.5px;" width="15" height="16" viewBox="0 0 15 16"><path d="M0 3H6V5H0ZM2 1H4V7H2Z" fill="#d787d7"/><path d="M8 3.5H10.2" stroke="#d787d7" stroke-width="1"/><rect x="5.5" y="6.0" width="8" height="8" fill="#252526"/><rect x="6.6" y="7.1" width="5.8" height="5.8" fill="#000" stroke="#3db8f5" stroke-width="1.2"/><path d="M8.2 11.5L10.6 9.1" stroke="#3db8f5" stroke-width="1.1"/><path d="M8.8 8.7H11V10.9Z" fill="#3db8f5"/></svg>
<span class="t" style="top:670.5px;font-size:12px;line-height:18px;height:18px;color:#f1f1f1;left:69px;letter-spacing:0.346px;">battle_event_def.cpp</span>
<svg style="left:29px;top:692.5px;" width="6" height="11" viewBox="0 0 6 11"><path d="M.6 .7L5 5.2L.6 9.7Z" fill="none" stroke="#f1f1f1" stroke-width="1.1"/></svg>
<svg style="left:50px;top:691.5px;" width="15" height="16" viewBox="0 0 15 16"><path d="M0 3H6V5H0ZM2 1H4V7H2Z" fill="#d787d7"/><path d="M8 3.5H10.2" stroke="#d787d7" stroke-width="1"/><rect x="5.5" y="6.0" width="8" height="8" fill="#252526"/><rect x="6.6" y="7.1" width="5.8" height="5.8" fill="#000" stroke="#3db8f5" stroke-width="1.2"/><path d="M8.2 11.5L10.6 9.1" stroke="#3db8f5" stroke-width="1.1"/><path d="M8.8 8.7H11V10.9Z" fill="#3db8f5"/></svg>
<span class="t" style="top:689.5px;font-size:12px;line-height:18px;height:18px;color:#f1f1f1;left:69px;letter-spacing:0.431px;">battle_hallow_gift_pool.cpp</span>
</div>
<div style="left:33px;top:861px;width:340px;height:21px;background:#2d2d30;"></div>
<div style="left:33px;top:861px;width:118px;height:21px;background:#252526;"></div>
<div style="left:151px;top:861px;width:222px;height:1px;background:#3f3f46;"></div>
<div style="left:151px;top:861px;width:1px;height:21px;background:#3f3f46;"></div>
<span class="t" style="top:862.5px;font-size:12px;line-height:18px;height:18px;color:#0097fb;left:38px;letter-spacing:-0.002px;">解决方案资源管理器</span>
<span class="t" style="top:862.5px;font-size:12px;line-height:18px;height:18px;color:#d0d0d0;left:158px;letter-spacing:-0.003px;">团队资源管理器</span>
<div style="left:380px;top:88px;width:225px;height:22px;background:#007acc;"></div>
<span class="t" style="top:91px;font-size:12px;line-height:18px;height:18px;color:#ffffff;left:384px;letter-spacing:0.561px;">asynctaskfactorymanager.hpp</span>
<svg style="left:569px;top:95px;" width="10" height="9" viewBox="0 0 10 9"><path d="M0 4.5H4M4.5 1V8M4.5 2.5H9.5V6H4.5" fill="none" stroke="#ffffff" stroke-width="1"/><path d="M4.5 5.5H9.5V6.5H4.5Z" fill="#fff"/></svg>
<svg style="left:588.5px;top:96.3px;" width="9" height="7.5" viewBox="0 0 9 7.5"><path d="M.6 .5L8.4 7.0M8.4 .5L.6 7.0" stroke="#ffffff" stroke-width="1.4" fill="none"/></svg>
<span class="t" style="top:91px;font-size:12px;line-height:18px;height:18px;color:#f1f1f1;left:610px;letter-spacing:0.559px;">animalracedef.cpp</span>
<span class="t" style="top:91px;font-size:12px;line-height:18px;height:18px;color:#f1f1f1;left:770px;letter-spacing:0.538px;">activitydatalistparam.hpp</span>
<div style="left:380px;top:109px;width:1820px;height:2px;background:#007acc;"></div>
<svg style="left:2189px;top:99px" width="8" height="4"><polygon points="0,0 8,0 4.0,4" fill="#f1f1f1"/></svg>
<div style="left:382px;top:112px;width:603px;height:20px;background:#333337;box-sizing:border-box;border:1px solid #434346;"></div>
<svg style="left:974.5px;top:121px" width="6" height="3"><polygon points="0,0 6,0 3.0,3" fill="#999999"/></svg>
<div style="left:988px;top:112px;width:604px;height:20px;background:#333337;box-sizing:border-box;border:1px solid #434346;"></div>
<svg style="left:1581.5px;top:121px" width="6" height="3"><polygon points="0,0 6,0 3.0,3" fill="#999999"/></svg>
<div style="left:1595px;top:112px;width:604px;height:20px;background:#333337;box-sizing:border-box;border:1px solid #434346;"></div>
<svg style="left:2188.5px;top:121px" width="6" height="3"><polygon points="0,0 6,0 3.0,3" fill="#999999"/></svg>
<svg style="left:385px;top:114.5px;" width="14" height="12" viewBox="0 0 14 12"><rect x=".5" y=".5" width="13" height="11" fill="#2a2a2d" stroke="#c586c0"/><path d="M3 2.5H8V4.5H3ZM4.5 1H6.5V6H4.5ZM6.5 7H12V9H6.5ZM8 5H10.5V10.5H8Z" fill="#e4e4e4"/></svg>
<span class="t" style="top:113px;font-size:12px;line-height:18px;height:18px;color:#f1f1f1;left:402px;letter-spacing:0.787px;">gameworld</span>
<span class="t" style="top:113px;font-size:12px;line-height:18px;height:18px;color:#f1f1f1;left:1009px;letter-spacing:0.000px;">(全局范围)</span>
<div style="left:381px;top:133px;width:17px;height:732px;background:#333333;"></div>
<div style="left:398px;top:133px;width:1782px;height:732px;background:#1e1e1e;"></div>
<div style="left:470px;top:133px;width:1709px;height:16px;background:transparent;box-sizing:border-box;border-top:2px solid #464646;border-bottom:2px solid #464646;border-right:2px solid #464646;border-left:2px solid #464646;"></div>
<div style="left:472px;top:133px;width:49px;height:16px;background:#154a82;"></div>
<div style="left:472px;top:581px;width:42px;height:16px;background:#154a82;"></div>
<span class="t" style="top:134.1px;font-size:12.5px;line-height:16px;height:16px;color:#2b91af;right:2127.5px;font-family:'Liberation Mono','Noto Sans CJK SC',monospace;letter-spacing:-0.5px;text-align:right;">1</span>
<span class="t" style="top:134.1px;font-size:12.5px;line-height:16px;height:16px;color:#dcdcdc;left:472px;font-family:'Liberation Mono','Noto Sans CJK SC',monospace;letter-spacing:-0.5px;"><span style="color:#9b9b9b">#ifndef</span> <span style="color:#dcdcdc">__ASYNC_TASK_FACTORY_MANAGER_HPP__</span></span>
<span class="t" style="top:150.1px;font-size:12.5px;line-height:16px;height:16px;color:#2b91af;right:2127.5px;font-family:'Liberation Mono','Noto Sans CJK SC',monospace;letter-spacing:-0.5px;text-align:right;">2</span>
<span class="t" style="top:150.1px;font-size:12.5px;line-height:16px;height:16px;color:#dcdcdc;left:472px;font-family:'Liberation Mono','Noto Sans CJK SC',monospace;letter-spacing:-0.5px;"><span style="color:#9b9b9b">#define</span> <span style="color:#bd63c5">__ASYNC_TASK_FACTORY_MANAGER_HPP__</span></span>
<span class="t" style="top:166.1px;font-size:12.5px;line-height:16px;height:16px;color:#2b91af;right:2127.5px;font-family:'Liberation Mono','Noto Sans CJK SC',monospace;letter-spacing:-0.5px;text-align:right;">3</span>
<span class="t" style="top:182.1px;font-size:12.5px;line-height:16px;height:16px;color:#2b91af;right:2127.5px;font-family:'Liberation Mono','Noto Sans CJK SC',monospace;letter-spacing:-0.5px;text-align:right;">4</span>
<span class="t" style="top:182.1px;font-size:12.5px;line-height:16px;height:16px;color:#dcdcdc;left:472px;font-family:'Liberation Mono','Noto Sans CJK SC',monospace;letter-spacing:-0.5px;"><span style="color:#9b9b9b">#include</span> <span style="color:#d69d85">&lt;map&gt;</span></span>
<span class="t" style="top:198.1px;font-size:12.5px;line-height:16px;height:16px;color:#2b91af;right:2127.5px;font-family:'Liberation Mono','Noto Sans CJK SC',monospace;letter-spacing:-0.5px;text-align:right;">5</span>
<span class="t" style="top:198.1px;font-size:12.5px;line-height:16px;height:16px;color:#dcdcdc;left:472px;font-family:'Liberation Mono','Noto Sans CJK SC',monospace;letter-spacing:-0.5px;"><span style="color:#9b9b9b">#include</span> <span style="color:#d69d85">&lt;string&gt;</span></span>
<span class="t" style="top:214.1px;font-size:12.5px;line-height:16px;height:16px;color:#2b91af;right:2127.5px;font-family:'Liberation Mono','Noto Sans CJK SC',monospace;letter-spacing:-0.5px;text-align:right;">6</span>
<span class="t" style="top:214.1px;font-size:12.5px;line-height:16px;height:16px;color:#dcdcdc;left:472px;font-family:'Liberation Mono','Noto Sans CJK SC',monospace;letter-spacing:-0.5px;"><span style="color:#9b9b9b">#include</span> <span style="color:#d69d85">"servercommon/multithread/mutex_lock.h"</span></span>
<span class="t" style="top:230.1px;font-size:12.5px;line-height:16px;height:16px;color:#2b91af;right:2127.5px;font-family:'Liberation Mono','Noto Sans CJK SC',monospace;letter-spacing:-0.5px;text-align:right;">7</span>
<span class="t" style="top:246.1px;font-size:12.5px;line-height:16px;height:16px;color:#2b91af;right:2127.5px;font-family:'Liberation Mono','Noto Sans CJK SC',monospace;letter-spacing:-0.5px;text-align:right;">8</span>
<span class="t" style="top:246.1px;font-size:12.5px;line-height:16px;height:16px;color:#dcdcdc;left:472px;font-family:'Liberation Mono','Noto Sans CJK SC',monospace;letter-spacing:-0.5px;"><span style="color:#569cd6">class</span> <span style="color:#4ec9b0">IAsyncTaskFactory</span><span style="color:#b4b4b4">;</span></span>
<span class="t" style="top:262.1px;font-size:12.5px;line-height:16px;height:16px;color:#2b91af;right:2127.5px;font-family:'Liberation Mono','Noto Sans CJK SC',monospace;letter-spacing:-0.5px;text-align:right;">9</span>
<span class="t" style="top:262.1px;font-size:12.5px;line-height:16px;height:16px;color:#dcdcdc;left:472px;font-family:'Liberation Mono','Noto Sans CJK SC',monospace;letter-spacing:-0.5px;"><span style="color:#569cd6">class</span> <span style="color:#4ec9b0">IAsyncTask</span><span style="color:#b4b4b4">;</span></span>
<span class="t" style="top:278.1px;font-size:12.5px;line-height:16px;height:16px;color:#2b91af;right:2127.5px;font-family:'Liberation Mono','Noto Sans CJK SC',monospace;letter-spacing:-0.5px;text-align:right;">10</span>
<span class="t" style="top:278.1px;font-size:12.5px;line-height:16px;height:16px;color:#dcdcdc;left:472px;font-family:'Liberation Mono','Noto Sans CJK SC',monospace;letter-spacing:-0.5px;"><span style="color:#569cd6">class</span> <span style="color:#4ec9b0">AsyncTaskFactoryManager</span></span>
<span class="t" style="top:294.1px;font-size:12.5px;line-height:16px;height:16px;color:#2b91af;right:2127.5px;font-family:'Liberation Mono','Noto Sans CJK SC',monospace;letter-spacing:-0.5px;text-align:right;">11</span>
<span class="t" style="top:294.1px;font-size:12.5px;line-height:16px;height:16px;color:#dcdcdc;left:472px;font-family:'Liberation Mono','Noto Sans CJK SC',monospace;letter-spacing:-0.5px;"><span style="color:#dcdcdc">{</span></span>
<span class="t" style="top:310.1px;font-size:12.5px;line-height:16px;height:16px;color:#2b91af;right:2127.5px;font-family:'Liberation Mono','Noto Sans CJK SC',monospace;letter-spacing:-0.5px;text-align:right;">12</span>
<span class="t" style="top:310.1px;font-size:12.5px;line-height:16px;height:16px;color:#dcdcdc;left:472px;font-family:'Liberation Mono','Noto Sans CJK SC',monospace;letter-spacing:-0.5px;"><span style="color:#569cd6">public</span><span style="color:#b4b4b4">:</span></span>
<span class="t" style="top:326.1px;font-size:12.5px;line-height:16px;height:16px;color:#2b91af;right:2127.5px;font-family:'Liberation Mono','Noto Sans CJK SC',monospace;letter-spacing:-0.5px;text-align:right;">13</span>
<span class="t" style="top:326.1px;font-size:12.5px;line-height:16px;height:16px;color:#dcdcdc;left:472px;font-family:'Liberation Mono','Noto Sans CJK SC',monospace;letter-spacing:-0.5px;">    <span style="color:#569cd6">typedef</span> <span style="color:#dcdcdc">std</span><span style="color:#b4b4b4">::</span><span style="color:#4ec9b0">map</span><span style="color:#b4b4b4">&lt;</span><span style="color:#dcdcdc">std</span><span style="color:#b4b4b4">::</span><span style="color:#4ec9b0">string</span><span style="color:#b4b4b4">,</span> <span style="color:#4ec9b0">IAsyncTaskFactory</span><span style="color:#b4b4b4">*&gt;</span> <span style="color:#4ec9b0">FactoryMap</span><span style="color:#b4b4b4">;</span></span>
<span class="t" style="top:342.1px;font-size:12.5px;line-height:16px;height:16px;color:#2b91af;right:2127.5px;font-family:'Liberation Mono','Noto Sans CJK SC',monospace;letter-spacing:-0.5px;text-align:right;">14</span>
<span class="t" style="top:358.1px;font-size:12.5px;line-height:16px;height:16px;color:#2b91af;right:2127.5px;font-family:'Liberation Mono','Noto Sans CJK SC',monospace;letter-spacing:-0.5px;text-align:right;">15</span>
<span class="t" style="top:358.1px;font-size:12.5px;line-height:16px;height:16px;color:#dcdcdc;left:472px;font-family:'Liberation Mono','Noto Sans CJK SC',monospace;letter-spacing:-0.5px;">    <span style="color:#dcdcdc">AsyncTaskFactoryManager() {}</span></span>
<span class="t" style="top:374.1px;font-size:12.5px;line-height:16px;height:16px;color:#2b91af;right:2127.5px;font-family:'Liberation Mono','Noto Sans CJK SC',monospace;letter-spacing:-0.5px;text-align:right;">16</span>
<span class="t" style="top:374.1px;font-size:12.5px;line-height:16px;height:16px;color:#dcdcdc;left:472px;font-family:'Liberation Mono','Noto Sans CJK SC',monospace;letter-spacing:-0.5px;">    <span style="color:#dcdcdc">~AsyncTaskFactoryManager();</span></span>
<span class="t" style="top:390.1px;font-size:12.5px;line-height:16px;height:16px;color:#2b91af;right:2127.5px;font-family:'Liberation Mono','Noto Sans CJK SC',monospace;letter-spacing:-0.5px;text-align:right;">17</span>
<span class="t" style="top:406.1px;font-size:12.5px;line-height:16px;height:16px;color:#2b91af;right:2127.5px;font-family:'Liberation Mono','Noto Sans CJK SC',monospace;letter-spacing:-0.5px;text-align:right;">18</span>
<span class="t" style="top:406.1px;font-size:12.5px;line-height:16px;height:16px;color:#dcdcdc;left:472px;font-family:'Liberation Mono','Noto Sans CJK SC',monospace;letter-spacing:-0.5px;">    <span style="color:#569cd6">static</span> <span style="color:#4ec9b0">AsyncTaskFactoryManager</span><span style="color:#b4b4b4">&amp;</span> <span style="color:#dcdcdc">Instance();</span></span>
<span class="t" style="top:422.1px;font-size:12.5px;line-height:16px;height:16px;color:#2b91af;right:2127.5px;font-family:'Liberation Mono','Noto Sans CJK SC',monospace;letter-spacing:-0.5px;text-align:right;">19</span>
<span class="t" style="top:422.1px;font-size:12.5px;line-height:16px;height:16px;color:#dcdcdc;left:472px;font-family:'Liberation Mono','Noto Sans CJK SC',monospace;letter-spacing:-0.5px;">    <span style="color:#569cd6">bool</span> <span style="color:#dcdcdc">RegisterFactory(</span><span style="color:#569cd6">const</span> <span style="color:#dcdcdc">std</span><span style="color:#b4b4b4">::</span><span style="color:#4ec9b0">string</span><span style="color:#b4b4b4">&amp;</span> <span style="color:#7f7f7f">name</span><span style="color:#b4b4b4">,</span> <span style="color:#4ec9b0">IAsyncTaskFactory</span><span style="color:#b4b4b4">*</span> <span style="color:#7f7f7f">factory</span><span style="color:#dcdcdc">);</span></span>
<span class="t" style="top:438.1px;font-size:12.5px;line-height:16px;height:16px;color:#2b91af;right:2127.5px;font-family:'Liberation Mono','Noto Sans CJK SC',monospace;letter-spacing:-0.5px;text-align:right;">20</span>
<span class="t" style="top:438.1px;font-size:12.5px;line-height:16px;height:16px;color:#dcdcdc;left:472px;font-family:'Liberation Mono','Noto Sans CJK SC',monospace;letter-spacing:-0.5px;">    <span style="color:#4ec9b0">IAsyncTask</span><span style="color:#b4b4b4">*</span> <span style="color:#dcdcdc">Create(</span><span style="color:#569cd6">const</span> <span style="color:#dcdcdc">std</span><span style="color:#b4b4b4">::</span><span style="color:#4ec9b0">string</span><span style="color:#b4b4b4">&amp;</span> <span style="color:#7f7f7f">name</span><span style="color:#dcdcdc">);</span></span>
<span class="t" style="top:454.1px;font-size:12.5px;line-height:16px;height:16px;color:#2b91af;right:2127.5px;font-family:'Liberation Mono','Noto Sans CJK SC',monospace;letter-spacing:-0.5px;text-align:right;">21</span>
<span class="t" style="top:454.1px;font-size:12.5px;line-height:16px;height:16px;color:#dcdcdc;left:472px;font-family:'Liberation Mono','Noto Sans CJK SC',monospace;letter-spacing:-0.5px;"><span style="color:#569cd6">private</span><span style="color:#b4b4b4">:</span></span>
<span class="t" style="top:470.1px;font-size:12.5px;line-height:16px;height:16px;color:#2b91af;right:2127.5px;font-family:'Liberation Mono','Noto Sans CJK SC',monospace;letter-spacing:-0.5px;text-align:right;">22</span>
<span class="t" style="top:470.1px;font-size:12.5px;line-height:16px;height:16px;color:#dcdcdc;left:472px;font-family:'Liberation Mono','Noto Sans CJK SC',monospace;letter-spacing:-0.5px;">    <span style="color:#4ec9b0">AsyncTaskFactoryManager</span><span style="color:#b4b4b4">&amp;</span> <span style="color:#dcdcdc">operator=(</span><span style="color:#569cd6">const</span> <span style="color:#4ec9b0">AsyncTaskFactoryManager</span><span style="color:#b4b4b4">&amp;</span><span style="color:#dcdcdc">);</span></span>
<span class="t" style="top:486.1px;font-size:12.5px;line-height:16px;height:16px;color:#2b91af;right:2127.5px;font-family:'Liberation Mono','Noto Sans CJK SC',monospace;letter-spacing:-0.5px;text-align:right;">23</span>
<span class="t" style="top:486.1px;font-size:12.5px;line-height:16px;height:16px;color:#dcdcdc;left:472px;font-family:'Liberation Mono','Noto Sans CJK SC',monospace;letter-spacing:-0.5px;">    <span style="color:#dcdcdc">AsyncTaskFactoryManager(</span><span style="color:#569cd6">const</span> <span style="color:#4ec9b0">AsyncTaskFactoryManager</span><span style="color:#b4b4b4">&amp;</span><span style="color:#dcdcdc">);</span></span>
<span class="t" style="top:502.1px;font-size:12.5px;line-height:16px;height:16px;color:#2b91af;right:2127.5px;font-family:'Liberation Mono','Noto Sans CJK SC',monospace;letter-spacing:-0.5px;text-align:right;">24</span>
<span class="t" style="top:518.1px;font-size:12.5px;line-height:16px;height:16px;color:#2b91af;right:2127.5px;font-family:'Liberation Mono','Noto Sans CJK SC',monospace;letter-spacing:-0.5px;text-align:right;">25</span>
<span class="t" style="top:518.1px;font-size:12.5px;line-height:16px;height:16px;color:#dcdcdc;left:472px;font-family:'Liberation Mono','Noto Sans CJK SC',monospace;letter-spacing:-0.5px;">    <span style="color:#4ec9b0">FactoryMap</span> <span style="color:#dcdcdc">m_factory;</span></span>
<span class="t" style="top:534.1px;font-size:12.5px;line-height:16px;height:16px;color:#2b91af;right:2127.5px;font-family:'Liberation Mono','Noto Sans CJK SC',monospace;letter-spacing:-0.5px;text-align:right;">26</span>
<span class="t" style="top:534.1px;font-size:12.5px;line-height:16px;height:16px;color:#dcdcdc;left:472px;font-family:'Liberation Mono','Noto Sans CJK SC',monospace;letter-spacing:-0.5px;">    <span style="color:#4ec9b0">MutexLock</span> <span style="color:#dcdcdc">m_mutex;</span></span>
<span class="t" style="top:550.1px;font-size:12.5px;line-height:16px;height:16px;color:#2b91af;right:2127.5px;font-family:'Liberation Mono','Noto Sans CJK SC',monospace;letter-spacing:-0.5px;text-align:right;">27</span>
<span class="t" style="top:550.1px;font-size:12.5px;line-height:16px;height:16px;color:#dcdcdc;left:472px;font-family:'Liberation Mono','Noto Sans CJK SC',monospace;letter-spacing:-0.5px;"><span style="color:#dcdcdc">};</span></span>
<span class="t" style="top:566.1px;font-size:12.5px;line-height:16px;height:16px;color:#2b91af;right:2127.5px;font-family:'Liberation Mono','Noto Sans CJK SC',monospace;letter-spacing:-0.5px;text-align:right;">28</span>
<span class="t" style="top:582.1px;font-size:12.5px;line-height:16px;height:16px;color:#2b91af;right:2127.5px;font-family:'Liberation Mono','Noto Sans CJK SC',monospace;letter-spacing:-0.5px;text-align:right;">29</span>
<span class="t" style="top:582.1px;font-size:12.5px;line-height:16px;height:16px;color:#dcdcdc;left:472px;font-family:'Liberation Mono','Noto Sans CJK SC',monospace;letter-spacing:-0.5px;"><span style="color:#9b9b9b">#endif</span></span>
<div style="left:466px;top:146px;width:1px;height:435px;background:#a5a5a5;"></div>
<div style="left:461px;top:137px;width:9px;height:9px;background:#1e1e1e;box-sizing:border-box;border:1px solid #a5a5a5;"></div>
<div style="left:463px;top:141px;width:5px;height:1px;background:#a5a5a5;"></div>
<div style="left:461px;top:185px;width:9px;height:9px;background:#1e1e1e;box-sizing:border-box;border:1px solid #a5a5a5;"></div>
<div style="left:463px;top:189px;width:5px;height:1px;background:#a5a5a5;"></div>
<div style="left:461px;top:281px;width:9px;height:9px;background:#1e1e1e;box-sizing:border-box;border:1px solid #a5a5a5;"></div>
<div style="left:463px;top:285px;width:5px;height:1px;background:#a5a5a5;"></div>
<div style="left:466px;top:228px;width:4px;height:1px;background:#a5a5a5;"></div>
<div style="left:466px;top:564px;width:4px;height:1px;background:#a5a5a5;"></div>
<div style="left:466px;top:580px;width:4px;height:1px;background:#a5a5a5;"></div>
<div style="left:475px;top:325px;width:1px;height:128px;background:repeating-linear-gradient(to bottom,#5a5a5a 0,#5a5a5a 3px,transparent 3px,transparent 5px);"></div>
<div style="left:475px;top:469px;width:1px;height:80px;background:repeating-linear-gradient(to bottom,#5a5a5a 0,#5a5a5a 3px,transparent 3px,transparent 5px);"></div>
<svg style="left:675px;top:481px;" width="63" height="4" viewBox="0 0 63 4"><path d="M0 3 L2 1 L4 3 L6 1 L8 3 L10 1 L12 3 L14 1 L16 3 L18 1 L20 3 L22 1 L24 3 L26 1 L28 3 L30 1 L32 3 L34 1 L36 3 L38 1 L40 3 L42 1 L44 3 L46 1 L48 3 L50 1 L52 3 L54 1 L56 3 L58 1 L60 3 L62 1" fill="none" stroke="#46a046" stroke-width="1.2"/></svg>
<div style="left:2180px;top:133px;width:20px;height:732px;background:#3e3e42;"></div>
<div style="left:2181px;top:133px;width:18px;height:16px;background:#1e1e1e;"></div>
<svg style="left:2184px;top:135px;" width="12" height="12" viewBox="0 0 12 12"><path d="M0 6H12M6 0V4M6 8V12M4 2L6 0L8 2M4 10L6 12L8 10" fill="none" stroke="#f1f1f1" stroke-width="1.3"/></svg>
<svg style="left:2185px;top:156px" width="9" height="5"><polygon points="0,5 9,5 4.5,0" fill="#999999"/></svg>
<svg style="left:2185px;top:853px" width="9" height="5"><polygon points="0,0 9,0 4.5,5" fill="#999999"/></svg>
<div style="left:2180px;top:166px;width:20px;height:2px;background:#f1f1f1;"></div>
<div style="left:2184px;top:168px;width:11px;height:415px;background:#686868;"></div>
<div style="left:2194px;top:299px;width:4px;height:5px;background:#2f9e2f;"></div>
<div style="left:380px;top:865px;width:1820px;height:17px;background:#3e3e42;"></div>
<div style="left:380px;top:865px;width:2px;height:17px;background:#2d2d30;"></div>
<div style="left:382px;top:866px;width:58px;height:15px;background:#333337;box-sizing:border-box;border:1px solid #434346;"></div>
<span class="t" style="top:867px;font-size:11px;line-height:14px;height:14px;color:#f1f1f1;left:384px;letter-spacing:-0.051px;">100 %</span>
<svg style="left:431.5px;top:873px" width="6" height="3"><polygon points="0,0 6,0 3.0,3" fill="#f1f1f1"/></svg>
<svg style="left:447px;top:869px" width="5" height="9"><polygon points="5,0 5,9 0,4.5" fill="#5e5e62"/></svg>
<svg style="left:2169px;top:869px" width="5" height="9"><polygon points="0,0 0,9 5,4.5" fill="#5e5e62"/></svg>
<div style="left:32px;top:882px;width:2168px;height:8px;background:#3f3f46;"></div>
<div style="left:32px;top:890px;width:1px;height:450px;background:#3f3f46;"></div>
<div style="left:2199px;top:890px;width:1px;height:450px;background:#3f3f46;"></div>
<span class="t" style="top:893px;font-size:12px;line-height:18px;height:18px;color:#d0d0d0;left:37px;letter-spacing:-1.016px;">输出</span>
<svg style="left:69px;top:899px" width="2069" height="5"><rect width="2069" height="5" fill="url(#grip)"/></svg>
<svg style="left:2147px;top:900px" width="8" height="4"><polygon points="0,0 8,0 4.0,4" fill="#f1f1f1"/></svg>
<svg style="left:2165px;top:896px;" width="8" height="12" viewBox="0 0 8 12"><path d="M1.8 .5V7M1.3 .5H6" fill="none" stroke="#f1f1f1" stroke-width="1"/><rect x="4.2" y=".5" width="1.8" height="6.5" fill="#f1f1f1"/><rect x="0" y="6.5" width="7.6" height="1" fill="#f1f1f1"/><rect x="3.2" y="7.5" width="1" height="3.8" fill="#f1f1f1"/></svg>
<svg style="left:2181px;top:898px;" width="10" height="8" viewBox="0 0 10 8"><path d="M.6 .5L9.4 7.5M9.4 .5L.6 7.5" stroke="#f1f1f1" stroke-width="1.5" fill="none"/></svg>
<span class="t" style="top:916.5px;font-size:12px;line-height:18px;height:18px;color:#f1f1f1;left:40px;letter-spacing:-0.151px;">显示输出来源(<u>S</u>):</span>
<div style="left:136px;top:916px;width:300px;height:21px;background:#333337;box-sizing:border-box;border:1px solid #434346;"></div>
<span class="t" style="top:916.5px;font-size:12px;line-height:18px;height:18px;color:#f1f1f1;left:140px;letter-spacing:0.300px;">源代码管理 - Git</span>
<svg style="left:426px;top:925px" width="6" height="3"><polygon points="0,0 6,0 3.0,3" fill="#999999"/></svg>
<div style="left:443px;top:917px;width:1px;height:18px;background:#46464a;"></div>
<div style="left:473px;top:917px;width:1px;height:18px;background:#46464a;"></div>
<div style="left:525px;top:917px;width:1px;height:18px;background:#46464a;"></div>
<div style="left:555px;top:917px;width:1px;height:18px;background:#46464a;"></div>
<svg style="left:452px;top:918px;" width="14" height="15" viewBox="0 0 14 15"><path d="M4 6.5Q.8 6 1.2 3.5Q2 1 5 1.5" fill="none" stroke="#55555a" stroke-width="1.4"/><path d="M0 5L3 8.5L4.5 4.5Z" fill="#55555a"/><path d="M6 8.5H13.5M2 14.5H12" stroke="#55555a"/><rect x="2" y="10.5" width="6" height="2.5" fill="#55555a"/></svg>
<svg style="left:482px;top:919px;" width="13" height="13" viewBox="0 0 13 13"><path d="M7 2.5H1.5M4 0L1.5 2.5L4 5" fill="none" stroke="#55555a" stroke-width="1.4"/><path d="M5 6.5H12.5M2.5 9.5H12.5M2.5 12H12.5" stroke="#55555a" stroke-width="1.2"/></svg>
<svg style="left:504px;top:919px;" width="13" height="13" viewBox="0 0 13 13"><path d="M0 2.5H5.5M3 0L5.5 2.5L3 5" fill="none" stroke="#55555a" stroke-width="1.4"/><path d="M5 6.5H12.5M2.5 9.5H12.5M2.5 12H12.5" stroke="#55555a" stroke-width="1.2"/></svg>
<svg style="left:534px;top:918px;" width="14" height="15" viewBox="0 0 14 15"><path d="M6 1.5H13M8 4.5H13M1 8H13M1 11H13M1 14H13" stroke="#e8e8e8" stroke-width="1.6"/><path d="M.5 .5L7 7M7 .5L.5 7" stroke="#e8604c" stroke-width="1.5"/></svg>
<svg style="left:562px;top:919px;" width="16" height="13" viewBox="0 0 16 13"><path d="M10 3H14.5V9H8" fill="none" stroke="#e8e8e8" stroke-width="1.8"/><path d="M5.5 9L9.5 5.8V12.2Z" fill="#e8e8e8"/><text x="0" y="5" font-size="6" font-family="Liberation Sans,sans-serif" fill="#e8e8e8" font-weight="bold">ab</text><text x="0" y="11.5" font-size="6" font-family="Liberation Sans,sans-serif" fill="#e8e8e8" font-weight="bold">c</text></svg>
<div style="left:33px;top:939px;width:2149px;height:383px;background:#252526;"></div>
<div style="left:2182px;top:939px;width:18px;height:401px;background:#3e3e42;"></div>
<svg style="left:2185.75px;top:944.75px" width="9.5" height="5.5"><polygon points="0,5.5 9.5,5.5 4.75,0" fill="#999999"/></svg>
<svg style="left:2185.75px;top:1310.75px" width="9.5" height="5.5"><polygon points="0,0 9.5,0 4.75,5.5" fill="#999999"/></svg>
<div style="left:2186px;top:956px;width:9px;height:336px;background:#686868;"></div>
<div style="left:33px;top:1322px;width:2149px;height:18px;background:#3e3e42;"></div>
<div style="left:32px;top:1339px;width:2168px;height:1px;background:#46464a;"></div>
<svg style="left:39px;top:1326px" width="5" height="9"><polygon points="5,0 5,9 0,4.5" fill="#5e5e62"/></svg>
<svg style="left:2171px;top:1326px" width="5" height="9"><polygon points="0,0 0,9 5,4.5" fill="#5e5e62"/></svg>
<span class="t" style="top:1341.5px;font-size:12px;line-height:18px;height:18px;color:#d0d0d0;left:38px;letter-spacing:-0.005px;">错误列表</span>
<div style="left:92px;top:1340px;width:36px;height:21px;background:#252526;box-sizing:border-box;border:1px solid #3f3f46;border-top:0;"></div>
<span class="t" style="top:1341.5px;font-size:12px;line-height:18px;height:18px;color:#0097fb;left:98px;letter-spacing:-1.016px;">输出</span>
<div style="left:2206px;top:88px;width:348px;height:1273px;background:#3f3f46;"></div>
<div style="left:2207px;top:89px;width:346px;height:1271px;background:#2d2d30;"></div>
<span class="t" style="top:91.5px;font-size:12px;line-height:18px;height:18px;color:#d0d0d0;left:2211px;letter-spacing:-0.016px;">属性</span>
<svg style="left:2243px;top:98px" width="250" height="5"><rect width="250" height="5" fill="url(#grip)"/></svg>
<svg style="left:2501px;top:99px" width="8" height="4"><polygon points="0,0 8,0 4.0,4" fill="#f1f1f1"/></svg>
<svg style="left:2519px;top:95px;" width="8" height="12" viewBox="0 0 8 12"><path d="M1.8 .5V7M1.3 .5H6" fill="none" stroke="#f1f1f1" stroke-width="1"/><rect x="4.2" y=".5" width="1.8" height="6.5" fill="#f1f1f1"/><rect x="0" y="6.5" width="7.6" height="1" fill="#f1f1f1"/><rect x="3.2" y="7.5" width="1" height="3.8" fill="#f1f1f1"/></svg>
<svg style="left:2535px;top:96.5px;" width="10" height="8" viewBox="0 0 10 8"><path d="M.6 .5L9.4 7.5M9.4 .5L.6 7.5" stroke="#f1f1f1" stroke-width="1.5" fill="none"/></svg>
<div style="left:2207px;top:112px;width:345px;height:24px;background:#333337;"></div>
<svg style="left:2543px;top:123px" width="6" height="3"><polygon points="0,0 6,0 3.0,3" fill="#f1f1f1"/></svg>
<div style="left:2207px;top:163px;width:346px;height:1197px;background:#252526;"></div>
<div style="left:2207px;top:1297px;width:346px;height:1px;background:#37373b;"></div>
<div style="left:2210px;top:138px;width:23px;height:22px;background:#2d2d30;box-sizing:border-box;border:1px solid #3399ff;"></div>
<svg style="left:2214px;top:142px;" width="15" height="14" viewBox="0 0 15 14"><rect x="0" y="0" width="5" height="5" fill="#e0e0e0"/><path d="M1 2.5H4M2.5 1V4" stroke="#2d2d30"/><rect x="0" y="9" width="5" height="5" fill="#e0e0e0"/><path d="M1 11.5H4M2.5 10V13" stroke="#2d2d30"/><path d="M6 .5H11M6 2.5H11M6 4.5H11M6 6.5H11M6 8.5H11M6 11.5H11M6 13.5H11" stroke="#e0e0e0"/><path d="M12 2.5H14M12 4.5H14M12 6.5H14M12 8.5H14M12 13.5H14" stroke="#e0e0e0"/></svg>
<svg style="left:2237px;top:142px;" width="16" height="14" viewBox="0 0 16 14"><rect x="0" y="0" width="7" height="7" fill="#dcdcdc"/><text x=".8" y="6.3" font-size="7.5" font-weight="bold" font-family="Liberation Sans,sans-serif" fill="#2d2d30">A</text><text x="1" y="14" font-size="8" font-weight="bold" font-family="Liberation Sans,sans-serif" fill="#dcdcdc">Z</text><path d="M11 3V10" stroke="#050505" stroke-width="2.2"/><path d="M8.2 7.5L11 10.8L13.8 7.5" fill="none" stroke="#050505" stroke-width="1.6"/><path d="M8 9L11 12.2L14 9" fill="none" stroke="#3a96e8" stroke-width="1"/></svg>
<div style="left:2259px;top:140px;width:1px;height:20px;background:#222224;"></div>
<svg style="left:2264px;top:141px;" width="18" height="17" viewBox="0 0 18 17"><path d="M3 14L9.5 7.5" stroke="#9a9a9a" stroke-width="5.2" stroke-linecap="round"/><path d="M8.5 1.2L13.5 0L17 3.5V8L13 11.5L8 10.5L6.2 6Z" fill="#9a9a9a"/><path d="M12 3.2L15 5.8" stroke="#7a7a7a" stroke-width="2.2"/></svg>
<div style="left:0px;top:1367px;width:2560px;height:25px;background:#007acc;"></div>
<svg style="left:4px;top:1374px;" width="17" height="12" viewBox="0 0 17 12"><path d="M3.5 .8H16L13 11.2H.8Z" fill="none" stroke="#ffffff" stroke-width="1.5"/></svg>
<span class="t" style="top:1370.5px;font-size:12px;line-height:18px;height:18px;color:#ffffff;left:28px;letter-spacing:-0.016px;">就绪</span>
<span class="t" style="top:1370.5px;font-size:12px;line-height:18px;height:18px;color:#ffffff;left:1800px;letter-spacing:-0.008px;">行 1</span>
<span class="t" style="top:1370.5px;font-size:12px;line-height:18px;height:18px;color:#ffffff;left:1892px;letter-spacing:-0.008px;">列 1</span>
<span class="t" style="top:1370.5px;font-size:12px;line-height:18px;height:18px;color:#ffffff;left:1984px;letter-spacing:-0.005px;">字符 1</span>
<span class="t" style="top:1370.5px;font-size:12px;line-height:18px;height:18px;color:#ffffff;left:2120px;letter-spacing:0.492px;">Ins</span>
<svg style="left:2416px;top:1373px;" width="9" height="12" viewBox="0 0 9 12"><path d="M4.5 12V1.5M.8 5L4.5 1.2L8.2 5" fill="none" stroke="#ffffff" stroke-width="1.8"/></svg>
<span class="t" style="top:1370.5px;font-size:12px;line-height:18px;height:18px;color:#ffffff;left:2435px;letter-spacing:-0.002px;">添加到源代码管理</span>
<svg style="left:2537px;top:1377px" width="8" height="4"><polygon points="0,4 8,4 4.0,0" fill="#ffffff"/></svg>
<div style="left:0px;top:1392px;width:2560px;height:48px;background:linear-gradient(to right,#dedede 0%,#dddddd 11.5%,#d9dbe6 12.8%,#d9dce9 21.5%,#dddddf 24.5%,#dededf 29.5%,#dcdce8 31.5%,#dcdde9 50%,#dddde8 61%,#dddde8 69%,#dedede 71%,#dedede 75.5%,#dadee8 77%,#dadee8 78.5%,#dedee3 80%,#dedede 100%);"></div>
<svg style="left:10px;top:1403px;" width="23" height="22" viewBox="0 0 23 22"><path d="M1 6.5L4.5 7.2M3 1.5L5.8 4.2M7.5 .5V3.5" stroke="#1e9be8" stroke-width="1.6" stroke-linecap="round"/><rect x="5" y="6" width="17" height="15" rx="1.2" fill="#1565c0"/><rect x="6.5" y="7.5" width="6.5" height="12" fill="#f3f3f8"/><rect x="14" y="7.5" width="6.5" height="6" fill="#5cc8ff"/><rect x="14" y="14" width="6.5" height="2.8" fill="#1e9bf0"/><rect x="14" y="17" width="6.5" height="2.5" fill="#0a78d8"/></svg>
<svg style="left:1003px;top:1405px;" width="23" height="23" viewBox="0 0 23 23"><defs><linearGradient id="wg" x1="0" y1="0" x2="1" y2="1"><stop offset="0" stop-color="#52c7fb"/><stop offset="1" stop-color="#0a6fd6"/></linearGradient></defs><path d="M0 0H11V11H0ZM12 0H23V11H12ZM0 12H11V23H0ZM12 12H23V23H12Z" fill="url(#wg)"/></svg>
<div style="left:1040px;top:1401px;width:218px;height:30px;background:#f2f1f7;box-sizing:border-box;border:1px solid #cfd0da;border-radius:15px;"></div>
<svg style="left:1050px;top:1408px;" width="17" height="17" viewBox="0 0 17 17"><circle cx="7" cy="7.2" r="5.6" fill="none" stroke="#1f1f1f" stroke-width="1.7"/><path d="M11 11.3L15.5 16" stroke="#1f1f1f" stroke-width="1.9" stroke-linecap="round"/></svg>
<span class="t" style="top:1406.5px;font-size:14px;line-height:20px;height:20px;color:#4a4a4a;left:1076px;letter-spacing:0.000px;">搜索</span>
<svg style="left:1271px;top:1405px;" width="25" height="23" viewBox="0 0 25 23"><defs><linearGradient id="tv1" x1="0" y1="0" x2="1" y2="1"><stop offset="0" stop-color="#4a4a4a"/><stop offset="1" stop-color="#141414"/></linearGradient><linearGradient id="tv2" x1="0" y1="1" x2="1" y2="0"><stop offset="0" stop-color="#c9c9c9"/><stop offset="1" stop-color="#fafafa"/></linearGradient></defs><rect x="0" y="6" width="18" height="16" rx="1.5" fill="url(#tv1)"/><rect x="6" y="0" width="18" height="15" rx="1.5" fill="url(#tv2)" opacity=".93"/></svg>
<svg style="left:1314px;top:1404px;" width="26" height="24" viewBox="0 0 26 24"><path d="M1 3Q1 1 3 1H8.5L11 3.5H23.5Q25 3.5 25 5V20Q25 22 23 22H3Q1 22 1 20Z" fill="#e0a315"/><path d="M1 6.5Q1 5 2.5 5H23.5Q25 5 25 6.5V20.5Q25 22.5 23 22.5H3Q1 22.5 1 20.5Z" fill="#fdd154"/><path d="M5 22.5V18.5Q5 16.5 7 16.5H19Q21 16.5 21 18.5V22.5Z" fill="#1785e0"/><rect x="9" y="19" width="8" height="1.6" rx=".8" fill="#0f62b0"/></svg>
<svg style="left:1358px;top:1404px;" width="25" height="25" viewBox="0 0 25 25"><path d="M7.5 6V3.5Q7.5 1 10 1H15Q17.5 1 17.5 3.5V6" fill="none" stroke="#36b4f2" stroke-width="2"/><path d="M1 5.5H24V20Q24 24 20 24H5Q1 24 1 20Z" fill="#1c4f8e"/><rect x="8" y="10" width="4" height="4" fill="#f25022"/><rect x="13" y="10" width="4" height="4" fill="#7fba00"/><rect x="8" y="15" width="4" height="4" fill="#00a4ef"/><rect x="13" y="15" width="4" height="4" fill="#ffb900"/></svg>
<svg style="left:1402px;top:1403px;" width="26" height="26" viewBox="0 0 26 26"><circle cx="13" cy="13" r="12.5" fill="#ffcd40"/><path d="M13 13L2.2 6.7A12.5 12.5 0 0 1 23.8 6.7Z" fill="#e33b2e"/><path d="M2.2 6.7A12.5 12.5 0 0 0 10.5 25.2L16 13H7Z" fill="#1da362"/><path d="M13 13L2.2 6.7L8 17Z" fill="#1da362"/><path d="M23.8 6.7H13L18 16L10.5 25.2A12.5 12.5 0 0 0 23.8 6.7Z" fill="#ffcd40"/><circle cx="13" cy="13" r="5.8" fill="#ffffff"/><circle cx="13" cy="13" r="4.6" fill="#4285f4"/></svg>
<svg style="left:1448px;top:1404px;" width="22" height="24" viewBox="0 0 22 24"><path d="M11 0L21.5 6V18L11 24L.5 18V6Z" fill="#e4e4e4"/><path d="M11 12L21.5 6V18L11 24Z" fill="#bdbdbd"/><path d="M11 12L.5 6V18L11 24Z" fill="#9c9c9c"/><path d="M11 5.5L16.5 8.7V15.3L11 18.5L5.5 15.3V8.7Z" fill="none" stroke="#2a2a2a" stroke-width="2"/><path d="M11 12V18.5M11 12L5.5 8.7M11 12L16.5 8.7" stroke="#2a2a2a" stroke-width="2"/></svg>
<svg style="left:1492px;top:1404px;" width="23" height="24" viewBox="0 0 23 24"><path d="M0 12L17.5 .5L22.5 4.5V19.5L17.5 23.5Z" fill="#111111"/><path d="M5.2 11L16 4.4L12.2 11ZM5.2 13L16 19.6L12.2 13ZM14 12L18.6 5V19Z" fill="#ececf2"/></svg>
<div style="left:1528px;top:1397px;width:38px;height:38px;background:#eeeef5;border-radius:5px;box-shadow:0 0 0 1px rgba(255,255,255,.35);"></div>
<svg style="left:1534px;top:1404px;" width="26" height="25" viewBox="0 0 26 25"><g transform="scale(1.24 1.2)"><path d="M15 0L20.2 2V18L15 20Z" fill="#865fc5"/><path d="M-.3 15.1L15.2 16.2V20Z" fill="#865fc5"/><path d="M1.4 5.9L10.6 13.6M1.4 11.7L10.6 3.7" stroke="#865fc5" stroke-width="2.1" fill="none"/><path d="M1.4 5.2V12.4" stroke="#865fc5" stroke-width="1.3"/><path d="M9.8 3L12.7 4.2V13.2L9.8 14.4Z" fill="#865fc5"/></g></svg>
<div style="left:1324px;top:1432px;width:6px;height:3px;background:#85858c;border-radius:1.5px;"></div>
<div style="left:1412px;top:1432px;width:6px;height:3px;background:#85858c;border-radius:1.5px;"></div>
<div style="left:1456px;top:1432px;width:6px;height:3px;background:#85858c;border-radius:1.5px;"></div>
<div style="left:1500px;top:1432px;width:6px;height:3px;background:#85858c;border-radius:1.5px;"></div>
<div style="left:1539px;top:1432px;width:16px;height:3px;background:#0a74d4;border-radius:1.5px;"></div>
<div style="left:2105px;top:1408px;width:16px;height:16px;background:#f0186c;border-radius:3.5px;"></div>
<svg style="left:2105px;top:1408px;" width="16" height="16" viewBox="0 0 16 16"><path d="M3.5 3.8L10 7.8L3.5 11.2Z" fill="#ffffff"/><path d="M12.8 5.2L6.5 9L12.8 12.8Z" fill="#ffd9e6"/></svg>
<svg style="left:2137px;top:1407px;" width="15" height="16" viewBox="0 0 15 16"><path d="M7.5 .5L14 4.2V11.8L7.5 15.5L1 11.8V4.2Z" fill="#f4f4f6" stroke="#eaeaee"/><path d="M7.5 8V15M7.5 8L1.5 4.5M7.5 8L13.5 4.5" stroke="#d4d4da" stroke-width="1.2"/></svg>
<svg style="left:2168px;top:1408px;" width="18" height="15" viewBox="0 0 18 15"><ellipse cx="6.5" cy="5.5" rx="6.3" ry="5.3" fill="#2cc35a"/><path d="M2.5 9L2 12.2L5.5 10.3Z" fill="#2cc35a"/><circle cx="4.4" cy="4" r=".8" fill="#1f8f41"/><circle cx="8.4" cy="4" r=".8" fill="#1f8f41"/><ellipse cx="12.5" cy="10" rx="5.2" ry="4.4" fill="#f3f3f3"/><circle cx="10.8" cy="9" r=".7" fill="#b5b5b5"/><circle cx="14.2" cy="9" r=".7" fill="#b5b5b5"/></svg>
<div style="left:2201px;top:1408px;width:16px;height:16px;background:#1b1b1b;"></div>
<svg style="left:2201px;top:1408px;" width="16" height="16" viewBox="0 0 16 16"><path d="M6.5 4.5H13.5V12H6.5" fill="#76b900"/><path d="M2.5 8.2Q5 4.8 8.5 5.5Q11 6.3 11.5 8.2Q10 11 7.5 10.8Q5 10.5 4.5 8.2Q6 6.8 7.8 7.3" fill="none" stroke="#76b900" stroke-width="1.1"/><path d="M6.5 5.2Q9.5 5 11 8.2Q9.5 11.2 6.5 11" fill="#1b1b1b" stroke="#76b900" stroke-width="1"/><circle cx="8" cy="8.3" r="1.2" fill="#76b900"/></svg>
<svg style="left:2233px;top:1407px;" width="16" height="17" viewBox="0 0 16 17"><path d="M1 2.8L8 .5L15 2.8V9Q15 14 8 16.5Q1 14 1 9Z" fill="#ffa31a"/><path d="M8 .5L15 2.8V9Q15 14 8 16.5Z" fill="#ff8a0a"/><path d="M9.5 3.5Q5 8 5 11.5Q5.5 14.5 8.3 15Q11.5 13.5 10.5 9.5Q9 11 8.5 12.5Q8 9 9.5 3.5Z" fill="#ffffff"/></svg>
<svg style="left:2264px;top:1407px;" width="17" height="18" viewBox="0 0 17 18"><ellipse cx="8.5" cy="11" rx="6.2" ry="6" fill="#111"/><ellipse cx="8.5" cy="5.5" rx="4.6" ry="4.8" fill="#111"/><ellipse cx="8.5" cy="12.5" rx="3.6" ry="4" fill="#fff"/><ellipse cx="7" cy="4.8" rx="1.1" ry="1.5" fill="#fff"/><ellipse cx="10" cy="4.8" rx="1.1" ry="1.5" fill="#fff"/><ellipse cx="8.5" cy="7.6" rx="2.4" ry=".9" fill="#f5a800"/><path d="M3.2 8.6Q8.5 11.5 13.8 8.6L13.5 10.5Q8.5 13 3.5 10.5Z" fill="#e8211c"/><path d="M5 10.5L4.3 14L6.3 13.5L6.5 11Z" fill="#e8211c"/><ellipse cx="5.3" cy="17" rx="2.8" ry="1" fill="#f5a800"/><ellipse cx="11.7" cy="17" rx="2.8" ry="1" fill="#f5a800"/></svg>
<svg style="left:2299px;top:1408px;" width="12" height="16" viewBox="0 0 12 16"><ellipse cx="6" cy="8" rx="6" ry="8" fill="#1e8fff"/><path d="M3 5L8.8 10.6L6 13.2V2.8L8.8 5.4L3 11" fill="none" stroke="#fff" stroke-width="1.1"/></svg>
<span class="t" style="top:1405.5px;font-size:15.5px;line-height:20px;height:20px;color:#dedede;left:2329.5px;font-weight:900;-webkit-text-stroke:.9px #1c1c1c;">中</span>
<svg style="left:2366px;top:1407px;" width="18" height="18" viewBox="0 0 18 18"><rect x="2" y="2" width="14" height="14" rx="3" fill="#f0501e" transform="rotate(-14 9 9)"/><path d="M12.5 5.8Q8 4.5 6 6.5Q5 8.5 9 9.3Q12.5 10 11.5 11.8Q9.5 13.3 5 12" fill="none" stroke="#fff" stroke-width="2" transform="rotate(-14 9 9)"/></svg>
<svg style="left:2405px;top:1408px;" width="17" height="17" viewBox="0 0 17 17"><path d="M11 1H.8V12.5H13" fill="none" stroke="#1a1a1a" stroke-width="1.4"/><path d="M3 15.5H11.5M5 13V15.5M9.5 13V15.5" stroke="#1a1a1a" stroke-width="1.4"/><rect x="12" y=".7" width="3.6" height="5" rx="1" fill="none" stroke="#1a1a1a" stroke-width="1.3"/><path d="M13.8 5.7V16" stroke="#1a1a1a" stroke-width="1.3"/></svg>
<svg style="left:2429px;top:1408px;" width="17" height="16" viewBox="0 0 17 16"><path d="M.8 5.5H3.5L7 2V14L3.5 10.5H.8Z" fill="none" stroke="#1a1a1a" stroke-width="1.3" stroke-linejoin="round"/><path d="M9 5.2Q10.6 8 9 10.8M11.3 3.3Q14 8 11.3 12.7M13.6 1.5Q17.5 8 13.6 14.5" fill="none" stroke="#1a1a1a" stroke-width="1.3" stroke-linecap="round"/></svg>
<span class="t" style="top:1400.5px;font-size:12px;line-height:16px;height:16px;color:#1a1a1a;right:43px;letter-spacing:-0.453px;">8:32</span>
<span class="t" style="top:1416px;font-size:12px;line-height:16px;height:16px;color:#1a1a1a;right:43px;letter-spacing:0.201px;">2024/3/20</span>
<svg style="left:2525px;top:1408px;" width="16" height="16" viewBox="0 0 16 16"><path d="M2 11.5Q3.5 10 3.5 6.5Q3.5 2.5 7 2.2M2 11.5H12.5Q11 10 11 7.5" fill="none" stroke="#1a1a1a" stroke-width="1.3"/><path d="M5.8 13.3Q7.2 15 8.7 13.3" fill="none" stroke="#1a1a1a" stroke-width="1.3"/><text x="5.5" y="9" font-size="6.5" font-weight="bold" font-family="Liberation Sans,sans-serif" fill="#1a1a1a">z</text><text x="9.5" y="5.5" font-size="6.5" font-weight="bold" font-family="Liberation Sans,sans-serif" fill="#1a1a1a">z</text></svg>
<div style="left:2448px;top:1258px;width:84px;height:42px;background:#0c0c0c;border-radius:4px;"></div>
<span class="t" style="top:1260.5px;font-size:14px;line-height:18px;height:18px;color:#f2a32a;left:2455px;font-family:'DejaVu Sans',sans-serif;">↑</span>
<span class="t" style="top:1261px;font-size:12.5px;line-height:18px;height:18px;color:#f2a32a;left:2470px;letter-spacing:0.107px;">0.0 KB/s</span>
<span class="t" style="top:1279.5px;font-size:14px;line-height:18px;height:18px;color:#7dd321;left:2455px;font-family:'DejaVu Sans',sans-serif;">↓</span>
<span class="t" style="top:1280px;font-size:12.5px;line-height:18px;height:18px;color:#7dd321;left:2470px;letter-spacing:0.107px;">0.4 KB/s</span>
<div style="left:2255px;top:1324px;width:214px;height:26px;background:#ffffff;border-radius:2px;box-shadow:0 0 0 .5px #b9d2f5;"></div>
<svg style="left:2243px;top:1320px;" width="32" height="31" viewBox="0 0 32 31"><defs><linearGradient id="sg" x1="0" y1="0" x2="0" y2="1"><stop offset="0" stop-color="#ff6a2a"/><stop offset="1" stop-color="#e8440f"/></linearGradient></defs><g transform="rotate(-15 16 15.5)"><rect x="3.5" y="3" width="25" height="25" rx="3.5" fill="url(#sg)"/><path d="M23 8.5Q14.5 6 10 9.5Q7.5 13 14.5 14.8Q22 16.5 20 20Q16 23.5 7.5 21" fill="none" stroke="#fff" stroke-width="3.6" stroke-linecap="round"/></g></svg>
<span class="t" style="top:1327px;font-size:15px;line-height:20px;height:20px;color:#0b68d6;left:2281px;font-weight:bold;">中</span>
<svg style="left:2306px;top:1329px;" width="14" height="16" viewBox="0 0 14 16"><circle cx="2.8" cy="4" r="1.8" fill="none" stroke="#0b68d6" stroke-width="1.5"/><path d="M9.5 7.5Q12.5 7.5 11.5 10.5Q10.8 12.5 8 13.5Q10 11.5 9.5 10.2Q8 9.5 9.5 7.5Z" fill="#0b68d6" stroke="#0b68d6" stroke-width=".8"/></svg>
<svg style="left:2330px;top:1329px;" width="13" height="17" viewBox="0 0 13 17"><rect x="3.7" y="0" width="5.6" height="10" rx="2.8" fill="#0b68d6"/><path d="M.8 7.5Q.8 12.5 6.5 12.5Q12.2 12.5 12.2 7.5" fill="none" stroke="#0b68d6" stroke-width="1.5"/><path d="M4.5 15.5H8.5" stroke="#0b68d6" stroke-width="1.6" stroke-linecap="round"/></svg>
<svg style="left:2353px;top:1331px;" width="16" height="13" viewBox="0 0 16 13"><rect x=".8" y=".8" width="14.4" height="11" rx="1.5" fill="none" stroke="#0b68d6" stroke-width="1.6"/><path d="M3 4H4.5M6 4H7.5M9 4H10.5M12 4H13M3 6.5H4.5M6 6.5H7.5M9 6.5H10.5M12 6.5H13M4.5 9.3H11.5" stroke="#0b68d6" stroke-width="1.5"/></svg>
<svg style="left:2377px;top:1327px;" width="19" height="18" viewBox="0 0 19 18"><defs><linearGradient id="ts" x1="0" y1="0" x2="1" y2="1"><stop offset="0" stop-color="#ff5a3c"/><stop offset=".5" stop-color="#9a5cf0"/><stop offset="1" stop-color="#4fd8ff"/></linearGradient></defs><path d="M0 6.5L4.5 4Q7 6.5 9.5 4L14 6.5L12.5 10L11 9.3V16.5H3V9.3L1.5 10Z" fill="url(#ts)"/><circle cx="15" cy="3" r="2.8" fill="#ff5533"/></svg>
<svg style="left:2401px;top:1331px;" width="16" height="14" viewBox="0 0 16 14"><path d="M4 .5H12Q15.5 .5 15.5 5V11Q15.5 13.5 13.5 13.5Q12 13.5 11 10.5H5Q4 13.5 2.5 13.5Q.5 13.5 .5 11V5Q.5 .5 4 .5Z" fill="#0b68d6"/><path d="M3 5H7M5 3V7" stroke="#fff" stroke-width="1.2"/><circle cx="10.5" cy="3.8" r="1" fill="#fff"/><circle cx="12.5" cy="6" r="1" fill="#fff"/><rect x="4.5" y="9.3" width="7" height="2.5" fill="#fff"/></svg>
<svg style="left:2426px;top:1331px;" width="14" height="14" viewBox="0 0 14 14"><rect x="0" y="0" width="6.2" height="6.2" rx="1.4" fill="#0b68d6"/><rect x="7.6" y="0" width="6.2" height="6.2" rx="1.4" fill="#0b68d6"/><rect x="0" y="7.6" width="6.2" height="6.2" rx="1.4" fill="#0b68d6"/><rect x="7.6" y="7.6" width="6.2" height="6.2" rx="1.4" fill="#0b68d6"/><rect x="9.8" y="2.2" width="2" height="2" fill="#fff"/></svg>
<svg style="left:2450px;top:1330px;" width="14" height="16" viewBox="0 0 14 16"><path d="M7 0L10.5 3.2L13.8 4L12.7 8L13.8 12L10.5 12.8L7 16L3.5 12.8L.2 12L1.3 8L.2 4L3.5 3.2Z" fill="#0b68d6"/><circle cx="7" cy="7.5" r="2.2" fill="#fff"/><path d="M7 9V14" stroke="#fff" stroke-width="1.5"/></svg>
</body></html>
